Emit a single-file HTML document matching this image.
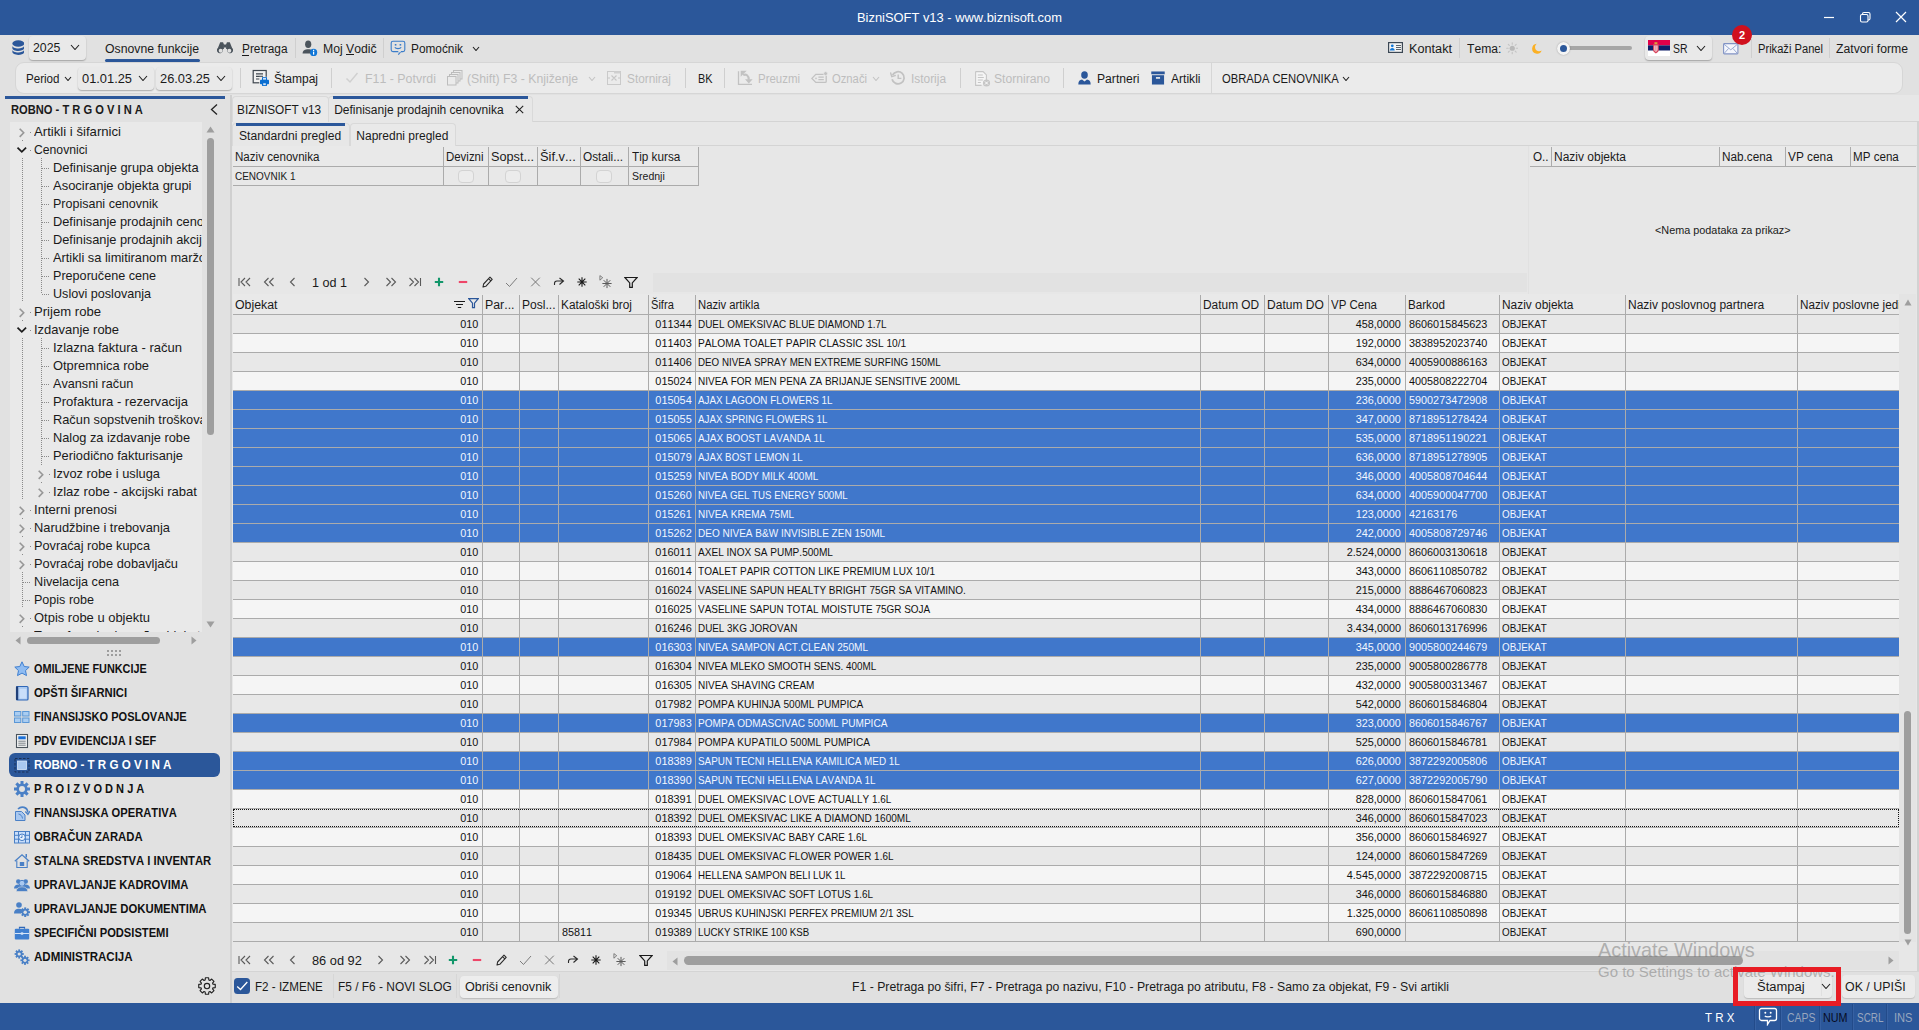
<!DOCTYPE html>
<html lang="sr"><head><meta charset="utf-8"><title>BizniSOFT v13 - www.biznisoft.com</title>
<style>
html,body{margin:0;padding:0}
body{width:1919px;height:1030px;overflow:hidden;position:relative;background:#e6e6e6;font-family:"Liberation Sans",sans-serif;font-size:12px;color:#1a1a1a;font-kerning:none}
.a{position:absolute;box-sizing:border-box;display:block}
.t{position:absolute;white-space:pre;display:inline-block}
.cb{border-radius:4px;background:#e9e9e9;box-shadow:0 1px 1.5px rgba(0,0,0,.28)}
</style></head><body>
<div class="a " style="left:0px;top:0px;width:1919px;height:35px;background:#2b579a;"></div>
<span class="t" style="top:9.00px;height:17px;line-height:17px;font-size:13px;color:#fff;left:857.00px;transform-origin:0 50%;transform:scaleX(0.9920);">BizniSOFT v13 - www.biznisoft.com</span>
<svg class="a" style="left:1822px;top:10px;" width="14" height="14" viewBox="0 0 14 14" preserveAspectRatio="none"><path d="M2 7.5H12" stroke="#fff" stroke-width="1.2"/></svg>
<svg class="a" style="left:1858px;top:10px;" width="14" height="14" viewBox="0 0 14 14" preserveAspectRatio="none"><rect x="2.5" y="4.5" width="7.5" height="7.5" rx="1.5" fill="none" stroke="#fff" stroke-width="1.1"/><path d="M4.5 4.5V4a1.5 1.5 0 0 1 1.5-1.5H10.5A1.5 1.5 0 0 1 12 4V8.5A1.5 1.5 0 0 1 10.5 10H10" fill="none" stroke="#fff" stroke-width="1.1"/></svg>
<svg class="a" style="left:1894px;top:10px;" width="14" height="14" viewBox="0 0 14 14" preserveAspectRatio="none"><path d="M2 2L12 12M12 2L2 12" stroke="#fff" stroke-width="1.2"/></svg>
<div class="a " style="left:0px;top:35px;width:1919px;height:61px;background:#e1e1e1;"></div>
<svg class="a" style="left:11.7px;top:39.5px;" width="12.6" height="15.5" viewBox="0 0 14 16" preserveAspectRatio="none"><g fill="#2b579a"><ellipse cx="7" cy="3.6" rx="6.6" ry="3.3"/><path d="M.4 5.6c0 1.8 3 3.2 6.6 3.2s6.6-1.4 6.6-3.2v2.6c0 1.8-3 3.2-6.6 3.2S.4 10 .4 8.200z"/><path d="M.4 9.8c0 1.800 3 3.200 6.600 3.200s6.600-1.400 6.600-3.200v2.400c0 1.800-3 3.200-6.600 3.200S.4 14 .4 12.200z"/></g></svg>
<div class="a cb" style="left:29px;top:36px;width:57px;height:23.5px;"></div>
<span class="t" style="top:39.00px;height:17px;line-height:17px;font-size:13px;left:33.00px;transform-origin:0 50%;transform:scaleX(0.9474);">2025</span>
<svg class="a" style="left:70.0px;top:43.95px;" width="10" height="6.5" viewBox="0 0 10 6.5" preserveAspectRatio="none"><path d="M1 1 L5.0 5.5 L9 1" fill="none" stroke="#222" stroke-width="1.1"/></svg>
<span class="t" style="top:40.50px;height:16px;line-height:16px;font-size:12px;left:105.00px;transform-origin:0 50%;transform:scaleX(1.0212);">Osnovne funkcije</span>
<div class="a " style="left:105px;top:59px;width:95px;height:3px;background:#2b579a;border-radius:1.5px;"></div>
<svg class="a" style="left:217px;top:41px;" width="16" height="14" viewBox="0 0 16 14" preserveAspectRatio="none"><g fill="#4b545c"><path d="M3.2 1.2h3v1.300h.7v5.500h-1.200a3 3 0 1 1-4.800-1z"/><path d="M12.800 1.200h-3v1.300h-.7v5.500h1.200a3 3 0 1 0 4.800-1z"/><rect x="6.500" y="3.500" width="3" height="3"/></g><circle cx="3.700" cy="9.700" r="2" fill="#e1e1e1"/><circle cx="12.300" cy="9.700" r="2" fill="#e1e1e1"/></svg>
<span class="t" style="top:40.50px;height:16px;line-height:16px;font-size:12px;left:242.00px;transform-origin:0 50%;transform:scaleX(0.9886);text-decoration:none;">Pretraga</span>
<div class="a " style="left:242px;top:54.5px;width:7px;height:1px;background:#1a1a1a;"></div>
<div class="a " style="left:295px;top:38px;width:1px;height:20px;background:#cfcfcf;"></div>
<svg class="a" style="left:302px;top:40px;" width="16" height="17" viewBox="0 0 16 17" preserveAspectRatio="none"><g fill="#4b545c"><ellipse cx="6.200" cy="4.300" rx="3.100" ry="3.800"/><path d="M.6 13.500c0-3 2.400-4.300 5.600-4.300s5.600 1.300 5.600 4.300z"/></g><circle cx="11.600" cy="12.400" r="3.600" fill="#1177d7"/><rect x="11" y="11.600" width="1.200" height="3" fill="#fff"/><rect x="11" y="9.800" width="1.200" height="1.200" fill="#fff"/></svg>
<span class="t" style="top:40.50px;height:16px;line-height:16px;font-size:12px;left:323.00px;transform-origin:0 50%;transform:scaleX(1.0187);">Moj Vodič</span>
<div class="a " style="left:346px;top:54px;width:7.5px;height:1px;background:#1a1a1a;"></div>
<div class="a " style="left:383px;top:38px;width:1px;height:20px;background:#cfcfcf;"></div>
<svg class="a" style="left:390px;top:40px;" width="16" height="16" viewBox="0 0 16 16" preserveAspectRatio="none"><rect x="1.200" y="1.200" width="13.600" height="10.400" rx="1.800" fill="none" stroke="#3b7dc9" stroke-width="1.100"/><path d="M10.800 11.600L8.300 14.600" stroke="#3b7dc9" stroke-width="1.100"/><path d="M8.300 11.600h2.500" stroke="#e1e1e1" stroke-width="1.300"/><rect x="4.800" y="4" width="1.600" height="1.600" fill="#3b7dc9"/><rect x="9.600" y="4" width="1.600" height="1.600" fill="#3b7dc9"/><path d="M4.800 7.300c1 1.700 5.400 1.700 6.400 0" fill="none" stroke="#3b7dc9" stroke-width="1.100"/></svg>
<span class="t" style="top:40.50px;height:16px;line-height:16px;font-size:12px;left:411.00px;transform-origin:0 50%;transform:scaleX(0.9869);">Pomoćnik</span>
<svg class="a" style="left:472.0px;top:45.75px;" width="8" height="5.5" viewBox="0 0 8 5.5" preserveAspectRatio="none"><path d="M1 1 L4.0 4.5 L7 1" fill="none" stroke="#222" stroke-width="1.1"/></svg>
<svg class="a" style="left:1388px;top:42px;" width="15" height="11" viewBox="0 0 15 11" preserveAspectRatio="none"><rect x=".6" y=".6" width="13.800" height="9.800" fill="#f4f4f4" stroke="#3b4754" stroke-width="1.200"/><circle cx="4.300" cy="3.800" r="1.400" fill="#1177d7"/><path d="M1.900 8.600c0-1.900 1-2.700 2.400-2.700s2.400.8 2.400 2.700z" fill="#1177d7"/><path d="M8 3.500h5M8 5.500h5M8 7.500h5" stroke="#4b545c" stroke-width=".9"/></svg>
<span class="t" style="top:40.50px;height:16px;line-height:16px;font-size:12px;left:1409.00px;transform-origin:0 50%;transform:scaleX(1.0567);">Kontakt</span>
<div class="a " style="left:1459px;top:38px;width:1px;height:20px;background:#cfcfcf;"></div>
<span class="t" style="top:40.50px;height:16px;line-height:16px;font-size:12px;left:1467.00px;transform-origin:0 50%;transform:scaleX(1.0099);">Tema:</span>
<svg class="a" style="left:1505.5px;top:42px;" width="12.5" height="12.5" viewBox="0 0 14 14" preserveAspectRatio="none"><circle cx="7" cy="7" r="2.900" fill="#b9b9b9"/><g stroke="#c4c4c4" stroke-width="1.300" stroke-linecap="round"><path d="M7 .8v1.600M7 11.600v1.600M.8 7h1.600M11.600 7h1.600M2.600 2.600l1.100 1.100M10.300 10.300l1.100 1.100M2.600 11.400l1.100-1.100M10.300 3.700l1.100-1.100"/></g></svg>
<svg class="a" style="left:1530.5px;top:42.5px;" width="11.5" height="11.5" viewBox="0 0 14 14" preserveAspectRatio="none"><path d="M7 1a6 6 0 1 0 6 8.200 4.600 4.600 0 0 1-6-8.200z" fill="#fbb024"/></svg>
<div class="a " style="left:1566px;top:46px;width:66px;height:4px;background:#a6a6a6;border-radius:2px;"></div>
<div class="a " style="left:1556.5px;top:41.5px;width:13px;height:13px;background:#f4f4f4;border-radius:50%;box-shadow:0 0 1.500px rgba(0,0,0,.35);"></div>
<div class="a " style="left:1559.5px;top:44.5px;width:7px;height:7px;background:#2b579a;border-radius:50%;"></div>
<div class="a cb" style="left:1644.5px;top:36px;width:67px;height:24px;"></div>
<svg class="a" style="left:1648px;top:40px;" width="22" height="16" viewBox="0 0 22 16" preserveAspectRatio="none"><rect width="22" height="5.400" fill="#e1004a"/><rect y="5.400" width="22" height="5.300" fill="#0f1f6b"/><rect y="10.700" width="22" height="5.300" fill="#fff"/><path d="M5 4.200h5.800v5.600c0 1.800-1.500 3-2.900 3.700-1.400-.7-2.900-1.900-2.900-3.700z" fill="#d8435c"/><path d="M6.200 5.400h3.400v4.200c0 1.100-.9 1.900-1.700 2.400-.8-.5-1.700-1.300-1.700-2.400z" fill="#f1d5d8"/><path d="M7.400 5.400h1v6.200h-1z" fill="#d8435c" opacity=".6"/><path d="M6.400 2.200h3v2h-3z" fill="#d9a13f"/></svg>
<span class="t" style="top:40.50px;height:16px;line-height:16px;font-size:12px;left:1673.00px;transform-origin:0 50%;transform:scaleX(0.8698);">SR</span>
<svg class="a" style="left:1696.0px;top:44.95px;" width="10" height="6.5" viewBox="0 0 10 6.5" preserveAspectRatio="none"><path d="M1 1 L5.0 5.5 L9 1" fill="none" stroke="#222" stroke-width="1.1"/></svg>
<svg class="a" style="left:1722.5px;top:43px;" width="16" height="12" viewBox="0 0 16 12" preserveAspectRatio="none"><rect x=".6" y=".6" width="14.300" height="10.300" rx=".8" fill="#f4f6fc" stroke="#8193c4" stroke-width="1.100"/><path d="M1 1.200L7.750 6.800L14.500 1.200M1 10.600L5.600 5.400M14.500 10.600L9.900 5.400" fill="none" stroke="#8fa0cc" stroke-width=".9"/></svg>
<div class="a " style="left:1732px;top:25px;width:20px;height:20px;background:#d0101e;border-radius:50%;"></div>
<span class="t" style="top:27.50px;height:15px;line-height:15px;font-size:11px;font-weight:bold;color:#fff;left:1738.94px;transform-origin:50% 50%;">2</span>
<div class="a " style="left:1751px;top:38px;width:1px;height:20px;background:#cfcfcf;"></div>
<span class="t" style="top:40.50px;height:16px;line-height:16px;font-size:12px;left:1758.00px;transform-origin:0 50%;transform:scaleX(0.9281);">Prikaži Panel</span>
<div class="a " style="left:1829px;top:38px;width:1px;height:20px;background:#cfcfcf;"></div>
<span class="t" style="top:40.50px;height:16px;line-height:16px;font-size:12px;left:1836.00px;transform-origin:0 50%;transform:scaleX(1.0186);">Zatvori forme</span>
<div class="a " style="left:15px;top:62px;width:1888px;height:32px;background:#ebebeb;border:1px solid #d6d6d6;border-radius:9px;"></div>
<span class="t" style="top:70.80px;height:16px;line-height:16px;font-size:12px;left:26.00px;transform-origin:0 50%;transform:scaleX(0.9658);">Period</span>
<svg class="a" style="left:64.0px;top:75.75px;" width="8" height="5.5" viewBox="0 0 8 5.5" preserveAspectRatio="none"><path d="M1 1 L4.0 4.5 L7 1" fill="none" stroke="#222" stroke-width="1.1"/></svg>
<div class="a cb" style="left:78px;top:66.5px;width:75.5px;height:23px;"></div>
<span class="t" style="top:70.80px;height:16px;line-height:16px;font-size:12px;left:82.00px;transform-origin:0 50%;transform:scaleX(1.0704);">01.01.25</span>
<svg class="a" style="left:138.0px;top:74.75px;" width="10" height="6.5" viewBox="0 0 10 6.5" preserveAspectRatio="none"><path d="M1 1 L5.0 5.5 L9 1" fill="none" stroke="#222" stroke-width="1.1"/></svg>
<div class="a cb" style="left:156px;top:66.5px;width:75.5px;height:23px;"></div>
<span class="t" style="top:70.80px;height:16px;line-height:16px;font-size:12px;left:160.00px;transform-origin:0 50%;transform:scaleX(1.0704);">26.03.25</span>
<svg class="a" style="left:216.0px;top:74.75px;" width="10" height="6.5" viewBox="0 0 10 6.5" preserveAspectRatio="none"><path d="M1 1 L5.0 5.5 L9 1" fill="none" stroke="#222" stroke-width="1.1"/></svg>
<div class="a " style="left:240px;top:68px;width:1px;height:20px;background:#cfcfcf;"></div>
<svg class="a" style="left:252px;top:69px;" width="18" height="18" viewBox="0 0 18 18" preserveAspectRatio="none"><rect x="1.200" y="1.500" width="13" height="12.300" fill="#f1f1f1" stroke="#3f474f" stroke-width="1.200"/><path d="M4 4.800h7M4 7.400h7M4 10h4.500" stroke="#3f474f" stroke-width="1.200"/><path d="M7.300 7.800h10.400v9.600H7.300z" fill="#ebebeb"/><rect x="8" y="10.800" width="9" height="4.400" rx=".8" fill="#0a6ed1"/><rect x="10" y="8.200" width="5" height="3" fill="#0a6ed1"/><rect x="11" y="9.200" width="3" height="1.300" fill="#fff"/><rect x="10" y="13.600" width="5" height="3.300" fill="#0a6ed1"/><rect x="11.200" y="14.400" width="2.600" height="1.400" fill="#fff"/></svg>
<span class="t" style="top:70.80px;height:16px;line-height:16px;font-size:12px;left:274.00px;transform-origin:0 50%;">Štampaj</span>
<div class="a " style="left:331px;top:68px;width:1px;height:20px;background:#cfcfcf;"></div>
<svg class="a" style="left:345px;top:71px;" width="14" height="13" viewBox="0 0 14 13" preserveAspectRatio="none"><path d="M1.500 7.500L5 11L12.500 2" fill="none" stroke="#d0d0d0" stroke-width="1.500"/></svg>
<span class="t" style="top:70.80px;height:16px;line-height:16px;font-size:12px;color:#bdbdbd;left:365.00px;transform-origin:0 50%;transform:scaleX(1.0325);">F11 - Potvrdi</span>
<svg class="a" style="left:447px;top:70px;" width="16" height="16" viewBox="0 0 16 16" preserveAspectRatio="none"><g fill="#ebebeb" stroke="#bdbdbd" stroke-width="1"><rect x="6.500" y=".5" width="8.500" height="8.500"/><rect x="4.500" y="2.500" width="8.500" height="8.500"/><rect x="2.500" y="4.500" width="8.500" height="8.500"/><rect x=".5" y="6.500" width="8.500" height="8.500"/></g></svg>
<span class="t" style="top:70.80px;height:16px;line-height:16px;font-size:12px;color:#bdbdbd;left:467.00px;transform-origin:0 50%;transform:scaleX(1.0211);">(Shift) F3 - Knjiženje</span>
<svg class="a" style="left:588.0px;top:75.75px;" width="8" height="5.5" viewBox="0 0 8 5.5" preserveAspectRatio="none"><path d="M1 1 L4.0 4.5 L7 1" fill="none" stroke="#c4c4c4" stroke-width="1.1"/></svg>
<svg class="a" style="left:607px;top:71px;" width="14" height="14" viewBox="0 0 14 14" preserveAspectRatio="none"><rect x=".5" y=".5" width="13" height="13" fill="none" stroke="#cacaca" stroke-width="1"/><rect x="7" y=".5" width="6.500" height="2" fill="#cfcfcf"/><path d="M4.500 4.500l5 5M9.500 4.500l-5 5M.5 7h2.500M11 7h2.500" stroke="#c6c6c6" stroke-width="1.100"/></svg>
<span class="t" style="top:70.80px;height:16px;line-height:16px;font-size:12px;color:#bdbdbd;left:627.00px;transform-origin:0 50%;transform:scaleX(0.9847);">Storniraj</span>
<div class="a " style="left:685px;top:68px;width:1px;height:20px;background:#cfcfcf;"></div>
<span class="t" style="top:70.80px;height:16px;line-height:16px;font-size:12px;left:698.00px;transform-origin:0 50%;transform:scaleX(0.9058);">BK</span>
<div class="a " style="left:724px;top:68px;width:1px;height:20px;background:#cfcfcf;"></div>
<svg class="a" style="left:737px;top:70px;" width="17" height="16" viewBox="0 0 17 16" preserveAspectRatio="none"><path d="M1.500 1.200V14.400H15" fill="none" stroke="#c2c2c2" stroke-width="1.300"/><path d="M6.200 5.200C9 3.600 11.800 5.400 11.800 9.800" fill="none" stroke="#c2c2c2" stroke-width="2.100"/><path d="M3.700 .8v6l6-6z" fill="#c2c2c2"/><path d="M8 9.200h7.600l-3.800 4.400z" fill="#c2c2c2"/></svg>
<span class="t" style="top:70.80px;height:16px;line-height:16px;font-size:12px;color:#bdbdbd;left:758.00px;transform-origin:0 50%;transform:scaleX(0.9543);">Preuzmi</span>
<svg class="a" style="left:811px;top:71px;" width="17" height="13" viewBox="0 0 17 13" preserveAspectRatio="none"><path d="M4.800 3.400h9.400a1 1 0 0 1 1 1v6a1 1 0 0 1-1 1H4.800L.9 7.400z" fill="none" stroke="#c2c2c2" stroke-width="1.300"/><path d="M7.400 6.100h5.400M7.400 8.700h5.400" stroke="#c2c2c2" stroke-width="1.200"/><circle cx="5" cy="7.400" r=".8" fill="#c2c2c2"/><circle cx="14.600" cy="2.600" r="2" fill="#c2c2c2" stroke="#ebebeb" stroke-width=".8"/></svg>
<span class="t" style="top:70.80px;height:16px;line-height:16px;font-size:12px;color:#bdbdbd;left:832.00px;transform-origin:0 50%;transform:scaleX(0.9371);">Označi</span>
<svg class="a" style="left:872.0px;top:75.75px;" width="8" height="5.5" viewBox="0 0 8 5.5" preserveAspectRatio="none"><path d="M1 1 L4.0 4.5 L7 1" fill="none" stroke="#c4c4c4" stroke-width="1.1"/></svg>
<svg class="a" style="left:890px;top:70px;" width="16" height="16" viewBox="0 0 16 16" preserveAspectRatio="none"><path d="M2.600 5a6.100 6.100 0 1 1-.5 4.200" fill="none" stroke="#c2c2c2" stroke-width="1.800"/><path d="M.4 2.400L1.800 6.600l4-1.200" fill="none" stroke="#c2c2c2" stroke-width="1.500"/><path d="M8.200 4.600V8.400h3.200" fill="none" stroke="#c2c2c2" stroke-width="1.400"/></svg>
<span class="t" style="top:70.80px;height:16px;line-height:16px;font-size:12px;color:#bdbdbd;left:911.00px;transform-origin:0 50%;transform:scaleX(0.9903);">Istorija</span>
<div class="a " style="left:960px;top:68px;width:1px;height:20px;background:#cfcfcf;"></div>
<svg class="a" style="left:975px;top:71px;" width="16" height="16" viewBox="0 0 16 16" preserveAspectRatio="none"><path d="M.6 .6h7.500l3.300 3.300v9.900H.6z" fill="#f5f5f5" stroke="none"/><path d="M.6 .6h7.500l3.300 3.300v6M.6 .6v13.800h6" fill="none" stroke="#c6c6c6" stroke-width="1.100"/><path d="M2.800 4h5M2.800 6.500h6M2.800 9h5M2.800 11.500h3" stroke="#c6c6c6" stroke-width="1"/><circle cx="11.500" cy="12" r="3.600" fill="#c6c6c6"/><path d="M10 10.500l3 3M13 10.500l-3 3" stroke="#fff" stroke-width="1"/></svg>
<span class="t" style="top:70.80px;height:16px;line-height:16px;font-size:12px;color:#bdbdbd;left:994.00px;transform-origin:0 50%;transform:scaleX(1.0115);">Stornirano</span>
<div class="a " style="left:1063px;top:68px;width:1px;height:20px;background:#cfcfcf;"></div>
<svg class="a" style="left:1078px;top:71px;" width="13" height="14" viewBox="0 0 13 15" preserveAspectRatio="none"><g fill="#2b579a"><ellipse cx="6.500" cy="4.200" rx="3.300" ry="4"/><path d="M.3 14.500c0-3.500 1.500-5 3.700-5.300l2.500 2 2.500-2c2.200.3 3.700 1.800 3.700 5.300z"/></g></svg>
<span class="t" style="top:70.80px;height:16px;line-height:16px;font-size:12px;left:1097.00px;transform-origin:0 50%;transform:scaleX(1.0115);">Partneri</span>
<svg class="a" style="left:1151px;top:71px;" width="14" height="14" viewBox="0 0 15 15" preserveAspectRatio="none"><g fill="#2b579a"><rect x=".3" y=".5" width="14.400" height="3"/><path d="M1 4.500h13V14.500H1z"/></g><rect x="5.300" y="6.500" width="4.400" height="1.800" fill="#ebebeb"/></svg>
<span class="t" style="top:70.80px;height:16px;line-height:16px;font-size:12px;left:1171.00px;transform-origin:0 50%;transform:scaleX(1.0057);">Artikli</span>
<div class="a " style="left:1211px;top:63px;width:1px;height:30px;background:#d6d6d6;"></div>
<span class="t" style="top:70.80px;height:16px;line-height:16px;font-size:12px;left:1222.00px;transform-origin:0 50%;transform:scaleX(0.9352);">OBRADA CENOVNIKA</span>
<svg class="a" style="left:1342.0px;top:75.75px;" width="8" height="5.5" viewBox="0 0 8 5.5" preserveAspectRatio="none"><path d="M1 1 L4.0 4.5 L7 1" fill="none" stroke="#222" stroke-width="1.1"/></svg>
<div class="a " style="left:0px;top:95px;width:230px;height:908px;background:#e1e1e1;"></div>
<div class="a " style="left:5px;top:96px;width:220px;height:2.5px;background:#2b579a;"></div>
<span class="t" style="top:101.00px;height:17px;line-height:17px;font-size:13px;font-weight:bold;left:11.40px;transform-origin:0 50%;transform:scaleX(0.8575);">ROBNO - T R G O V I N A</span>
<svg class="a" style="left:209px;top:103px;" width="10" height="13" viewBox="0 0 10 13" preserveAspectRatio="none"><path d="M8 1.500L2.500 6.500L8 11.500" fill="none" stroke="#222" stroke-width="1.300"/></svg>
<div class="a " style="left:10px;top:122px;width:192px;height:510px;background:#e9e9e9;"></div>
<div class="a" style="left:10px;top:122px;width:192px;height:510px;overflow:hidden">
<svg class="a" style="left:8px;top:3.5px" width="8" height="12" viewBox="0 0 8 12"><path d="M1.700 2.700L5.700 6.800L1.700 10.900" fill="none" stroke="#979797" stroke-width="1.600"/></svg>
<div class="a" style="left:20px;top:10px;width:1px;height:1px;background:repeating-linear-gradient(to right,#8a8a8a 0 1px,transparent 1px 2px)"></div>
<span class="t" style="left:24.3px;top:1.0px;height:17px;line-height:17px;font-size:13px;transform-origin:0 50%;transform:scaleX(1.0122)">Artikli i šifarnici</span>
<svg class="a" style="left:6px;top:23.5px" width="12" height="8" viewBox="0 0 12 8"><path d="M1.500 1.700L5.800 5.900L10.100 1.700" fill="none" stroke="#1c1c1c" stroke-width="1.700"/></svg>
<div class="a" style="left:20px;top:28px;width:1px;height:1px;background:repeating-linear-gradient(to right,#8a8a8a 0 1px,transparent 1px 2px)"></div>
<span class="t" style="left:24.3px;top:19.0px;height:17px;line-height:17px;font-size:13px;transform-origin:0 50%;transform:scaleX(0.9372)">Cenovnici</span>
<div class="a" style="left:32px;top:46px;width:8px;height:1px;background:repeating-linear-gradient(to right,#8a8a8a 0 1px,transparent 1px 2px)"></div>
<span class="t" style="left:43.4px;top:37.0px;height:17px;line-height:17px;font-size:13px;transform-origin:0 50%;transform:scaleX(0.9924)">Definisanje grupa objekta</span>
<div class="a" style="left:32px;top:64px;width:8px;height:1px;background:repeating-linear-gradient(to right,#8a8a8a 0 1px,transparent 1px 2px)"></div>
<span class="t" style="left:43.4px;top:55.0px;height:17px;line-height:17px;font-size:13px;transform-origin:0 50%;transform:scaleX(0.9982)">Asociranje objekta grupi</span>
<div class="a" style="left:32px;top:82px;width:8px;height:1px;background:repeating-linear-gradient(to right,#8a8a8a 0 1px,transparent 1px 2px)"></div>
<span class="t" style="left:43.4px;top:73.0px;height:17px;line-height:17px;font-size:13px;transform-origin:0 50%;transform:scaleX(0.9623)">Propisani cenovnik</span>
<div class="a" style="left:32px;top:100px;width:8px;height:1px;background:repeating-linear-gradient(to right,#8a8a8a 0 1px,transparent 1px 2px)"></div>
<span class="t" style="left:43.4px;top:91.0px;height:17px;line-height:17px;font-size:13px;transform-origin:0 50%;transform:scaleX(0.9850)">Definisanje prodajnih cenovnika</span>
<div class="a" style="left:32px;top:118px;width:8px;height:1px;background:repeating-linear-gradient(to right,#8a8a8a 0 1px,transparent 1px 2px)"></div>
<span class="t" style="left:43.4px;top:109.0px;height:17px;line-height:17px;font-size:13px;transform-origin:0 50%;transform:scaleX(0.9850)">Definisanje prodajnih akcija</span>
<div class="a" style="left:32px;top:136px;width:8px;height:1px;background:repeating-linear-gradient(to right,#8a8a8a 0 1px,transparent 1px 2px)"></div>
<span class="t" style="left:43.4px;top:127.0px;height:17px;line-height:17px;font-size:13px;transform-origin:0 50%;transform:scaleX(0.9850)">Artikli sa limitiranom maržom</span>
<div class="a" style="left:32px;top:154px;width:8px;height:1px;background:repeating-linear-gradient(to right,#8a8a8a 0 1px,transparent 1px 2px)"></div>
<span class="t" style="left:43.4px;top:145.0px;height:17px;line-height:17px;font-size:13px;transform-origin:0 50%;transform:scaleX(0.9695)">Preporučene cene</span>
<div class="a" style="left:32px;top:172px;width:8px;height:1px;background:repeating-linear-gradient(to right,#8a8a8a 0 1px,transparent 1px 2px)"></div>
<span class="t" style="left:43.4px;top:163.0px;height:17px;line-height:17px;font-size:13px;transform-origin:0 50%;transform:scaleX(0.9687)">Uslovi poslovanja</span>
<svg class="a" style="left:8px;top:183.5px" width="8" height="12" viewBox="0 0 8 12"><path d="M1.700 2.700L5.700 6.800L1.700 10.900" fill="none" stroke="#979797" stroke-width="1.600"/></svg>
<div class="a" style="left:20px;top:190px;width:1px;height:1px;background:repeating-linear-gradient(to right,#8a8a8a 0 1px,transparent 1px 2px)"></div>
<span class="t" style="left:24.3px;top:181.0px;height:17px;line-height:17px;font-size:13px;transform-origin:0 50%;transform:scaleX(1.0080)">Prijem robe</span>
<svg class="a" style="left:6px;top:203.5px" width="12" height="8" viewBox="0 0 12 8"><path d="M1.500 1.700L5.800 5.900L10.100 1.700" fill="none" stroke="#1c1c1c" stroke-width="1.700"/></svg>
<div class="a" style="left:20px;top:208px;width:1px;height:1px;background:repeating-linear-gradient(to right,#8a8a8a 0 1px,transparent 1px 2px)"></div>
<span class="t" style="left:24.3px;top:199.0px;height:17px;line-height:17px;font-size:13px;transform-origin:0 50%;transform:scaleX(0.9967)">Izdavanje robe</span>
<div class="a" style="left:32px;top:226px;width:8px;height:1px;background:repeating-linear-gradient(to right,#8a8a8a 0 1px,transparent 1px 2px)"></div>
<span class="t" style="left:43.4px;top:217.0px;height:17px;line-height:17px;font-size:13px;transform-origin:0 50%;transform:scaleX(1.0030)">Izlazna faktura - račun</span>
<div class="a" style="left:32px;top:244px;width:8px;height:1px;background:repeating-linear-gradient(to right,#8a8a8a 0 1px,transparent 1px 2px)"></div>
<span class="t" style="left:43.4px;top:235.0px;height:17px;line-height:17px;font-size:13px;transform-origin:0 50%;transform:scaleX(0.9915)">Otpremnica robe</span>
<div class="a" style="left:32px;top:262px;width:8px;height:1px;background:repeating-linear-gradient(to right,#8a8a8a 0 1px,transparent 1px 2px)"></div>
<span class="t" style="left:43.4px;top:253.0px;height:17px;line-height:17px;font-size:13px;transform-origin:0 50%;transform:scaleX(0.9739)">Avansni račun</span>
<div class="a" style="left:32px;top:280px;width:8px;height:1px;background:repeating-linear-gradient(to right,#8a8a8a 0 1px,transparent 1px 2px)"></div>
<span class="t" style="left:43.4px;top:271.0px;height:17px;line-height:17px;font-size:13px;transform-origin:0 50%;transform:scaleX(1.0046)">Profaktura - rezervacija</span>
<div class="a" style="left:32px;top:298px;width:8px;height:1px;background:repeating-linear-gradient(to right,#8a8a8a 0 1px,transparent 1px 2px)"></div>
<span class="t" style="left:43.4px;top:289.0px;height:17px;line-height:17px;font-size:13px;transform-origin:0 50%;transform:scaleX(0.9850)">Račun sopstvenih troškova</span>
<div class="a" style="left:32px;top:316px;width:8px;height:1px;background:repeating-linear-gradient(to right,#8a8a8a 0 1px,transparent 1px 2px)"></div>
<span class="t" style="left:43.4px;top:307.0px;height:17px;line-height:17px;font-size:13px;transform-origin:0 50%;transform:scaleX(0.9822)">Nalog za izdavanje robe</span>
<div class="a" style="left:32px;top:334px;width:8px;height:1px;background:repeating-linear-gradient(to right,#8a8a8a 0 1px,transparent 1px 2px)"></div>
<span class="t" style="left:43.4px;top:325.0px;height:17px;line-height:17px;font-size:13px;transform-origin:0 50%;transform:scaleX(0.9885)">Periodično fakturisanje</span>
<svg class="a" style="left:27px;top:345.5px" width="8" height="12" viewBox="0 0 8 12"><path d="M1.700 2.700L5.700 6.800L1.700 10.900" fill="none" stroke="#979797" stroke-width="1.600"/></svg>
<div class="a" style="left:39px;top:352px;width:1px;height:1px;background:repeating-linear-gradient(to right,#8a8a8a 0 1px,transparent 1px 2px)"></div>
<span class="t" style="left:43.4px;top:343.0px;height:17px;line-height:17px;font-size:13px;transform-origin:0 50%;transform:scaleX(0.9871)">Izvoz robe i usluga</span>
<svg class="a" style="left:27px;top:363.5px" width="8" height="12" viewBox="0 0 8 12"><path d="M1.700 2.700L5.700 6.800L1.700 10.900" fill="none" stroke="#979797" stroke-width="1.600"/></svg>
<div class="a" style="left:39px;top:370px;width:1px;height:1px;background:repeating-linear-gradient(to right,#8a8a8a 0 1px,transparent 1px 2px)"></div>
<span class="t" style="left:43.4px;top:361.0px;height:17px;line-height:17px;font-size:13px;transform-origin:0 50%;transform:scaleX(1.0066)">Izlaz robe - akcijski rabat</span>
<svg class="a" style="left:8px;top:381.5px" width="8" height="12" viewBox="0 0 8 12"><path d="M1.700 2.700L5.700 6.800L1.700 10.900" fill="none" stroke="#979797" stroke-width="1.600"/></svg>
<div class="a" style="left:20px;top:388px;width:1px;height:1px;background:repeating-linear-gradient(to right,#8a8a8a 0 1px,transparent 1px 2px)"></div>
<span class="t" style="left:24.3px;top:379.0px;height:17px;line-height:17px;font-size:13px;transform-origin:0 50%;transform:scaleX(1.0075)">Interni prenosi</span>
<svg class="a" style="left:8px;top:399.5px" width="8" height="12" viewBox="0 0 8 12"><path d="M1.700 2.700L5.700 6.800L1.700 10.900" fill="none" stroke="#979797" stroke-width="1.600"/></svg>
<div class="a" style="left:20px;top:406px;width:1px;height:1px;background:repeating-linear-gradient(to right,#8a8a8a 0 1px,transparent 1px 2px)"></div>
<span class="t" style="left:24.3px;top:397.0px;height:17px;line-height:17px;font-size:13px;transform-origin:0 50%;transform:scaleX(0.9905)">Narudžbine i trebovanja</span>
<svg class="a" style="left:8px;top:417.5px" width="8" height="12" viewBox="0 0 8 12"><path d="M1.700 2.700L5.700 6.800L1.700 10.900" fill="none" stroke="#979797" stroke-width="1.600"/></svg>
<div class="a" style="left:20px;top:424px;width:1px;height:1px;background:repeating-linear-gradient(to right,#8a8a8a 0 1px,transparent 1px 2px)"></div>
<span class="t" style="left:24.3px;top:415.0px;height:17px;line-height:17px;font-size:13px;transform-origin:0 50%;transform:scaleX(0.9788)">Povraćaj robe kupca</span>
<svg class="a" style="left:8px;top:435.5px" width="8" height="12" viewBox="0 0 8 12"><path d="M1.700 2.700L5.700 6.800L1.700 10.900" fill="none" stroke="#979797" stroke-width="1.600"/></svg>
<div class="a" style="left:20px;top:442px;width:1px;height:1px;background:repeating-linear-gradient(to right,#8a8a8a 0 1px,transparent 1px 2px)"></div>
<span class="t" style="left:24.3px;top:433.0px;height:17px;line-height:17px;font-size:13px;transform-origin:0 50%;transform:scaleX(0.9864)">Povraćaj robe dobavljaču</span>
<div class="a" style="left:13px;top:460px;width:8px;height:1px;background:repeating-linear-gradient(to right,#8a8a8a 0 1px,transparent 1px 2px)"></div>
<span class="t" style="left:24.3px;top:451.0px;height:17px;line-height:17px;font-size:13px;transform-origin:0 50%;transform:scaleX(0.9722)">Nivelacija cena</span>
<div class="a" style="left:13px;top:478px;width:8px;height:1px;background:repeating-linear-gradient(to right,#8a8a8a 0 1px,transparent 1px 2px)"></div>
<span class="t" style="left:24.3px;top:469.0px;height:17px;line-height:17px;font-size:13px;transform-origin:0 50%;transform:scaleX(0.9654)">Popis robe</span>
<svg class="a" style="left:8px;top:489.5px" width="8" height="12" viewBox="0 0 8 12"><path d="M1.700 2.700L5.700 6.800L1.700 10.900" fill="none" stroke="#979797" stroke-width="1.600"/></svg>
<div class="a" style="left:20px;top:496px;width:1px;height:1px;background:repeating-linear-gradient(to right,#8a8a8a 0 1px,transparent 1px 2px)"></div>
<span class="t" style="left:24.3px;top:487.0px;height:17px;line-height:17px;font-size:13px;transform-origin:0 50%;transform:scaleX(0.9970)">Otpis robe u objektu</span>
<svg class="a" style="left:8px;top:507.5px" width="8" height="12" viewBox="0 0 8 12"><path d="M1.700 2.700L5.700 6.800L1.700 10.900" fill="none" stroke="#979797" stroke-width="1.600"/></svg>
<div class="a" style="left:20px;top:514px;width:1px;height:1px;background:repeating-linear-gradient(to right,#8a8a8a 0 1px,transparent 1px 2px)"></div>
<span class="t" style="left:24.3px;top:505.0px;height:17px;line-height:17px;font-size:13px;transform-origin:0 50%;transform:scaleX(0.9850)">Transfer robe između objekata</span>
<div class="a" style="left:12px;top:18px;width:1px;height:1px;background:repeating-linear-gradient(to bottom,#8a8a8a 0 1px,transparent 1px 2px)"></div>
<div class="a" style="left:12px;top:36px;width:1px;height:144px;background:repeating-linear-gradient(to bottom,#8a8a8a 0 1px,transparent 1px 2px)"></div>
<div class="a" style="left:12px;top:198px;width:1px;height:1px;background:repeating-linear-gradient(to bottom,#8a8a8a 0 1px,transparent 1px 2px)"></div>
<div class="a" style="left:12px;top:216px;width:1px;height:162px;background:repeating-linear-gradient(to bottom,#8a8a8a 0 1px,transparent 1px 2px)"></div>
<div class="a" style="left:12px;top:396px;width:1px;height:1px;background:repeating-linear-gradient(to bottom,#8a8a8a 0 1px,transparent 1px 2px)"></div>
<div class="a" style="left:12px;top:414px;width:1px;height:1px;background:repeating-linear-gradient(to bottom,#8a8a8a 0 1px,transparent 1px 2px)"></div>
<div class="a" style="left:12px;top:432px;width:1px;height:1px;background:repeating-linear-gradient(to bottom,#8a8a8a 0 1px,transparent 1px 2px)"></div>
<div class="a" style="left:12px;top:450px;width:1px;height:36px;background:repeating-linear-gradient(to bottom,#8a8a8a 0 1px,transparent 1px 2px)"></div>
<div class="a" style="left:12px;top:504px;width:1px;height:1px;background:repeating-linear-gradient(to bottom,#8a8a8a 0 1px,transparent 1px 2px)"></div>
<div class="a" style="left:12px;top:522px;width:1px;height:-10px;background:repeating-linear-gradient(to bottom,#8a8a8a 0 1px,transparent 1px 2px)"></div>
<div class="a" style="left:31px;top:36px;width:1px;height:136px;background:repeating-linear-gradient(to bottom,#8a8a8a 0 1px,transparent 1px 2px)"></div>
<div class="a" style="left:31px;top:216px;width:1px;height:127px;background:repeating-linear-gradient(to bottom,#8a8a8a 0 1px,transparent 1px 2px)"></div>
<div class="a" style="left:31px;top:360px;width:1px;height:1px;background:repeating-linear-gradient(to bottom,#8a8a8a 0 1px,transparent 1px 2px)"></div>
</div>
<svg class="a" style="left:206px;top:126px;" width="9" height="7" viewBox="0 0 9 7" preserveAspectRatio="none"><path d="M4.500 .5L8.500 6.500H.5z" fill="#9e9e9e"/></svg>
<div class="a " style="left:207px;top:138px;width:7px;height:297px;background:#9e9e9e;border-radius:3.500px;"></div>
<svg class="a" style="left:206px;top:621px;" width="9" height="7" viewBox="0 0 9 7" preserveAspectRatio="none"><path d="M4.500 6.500L8.500 .5H.5z" fill="#9e9e9e"/></svg>
<svg class="a" style="left:15px;top:636px;" width="6" height="9" viewBox="0 0 6 9" preserveAspectRatio="none"><path d="M.5 4.500L5.500 .5V8.500z" fill="#9e9e9e"/></svg>
<div class="a " style="left:26.5px;top:637px;width:133px;height:7px;background:#9e9e9e;border-radius:3.500px;"></div>
<svg class="a" style="left:191px;top:636px;" width="6" height="9" viewBox="0 0 6 9" preserveAspectRatio="none"><path d="M5.500 4.500L.5 .5V8.500z" fill="#9e9e9e"/></svg>
<div class="a " style="left:107px;top:650px;width:2px;height:2px;background:#9d9d9d;"></div>
<div class="a " style="left:111px;top:650px;width:2px;height:2px;background:#9d9d9d;"></div>
<div class="a " style="left:115px;top:650px;width:2px;height:2px;background:#9d9d9d;"></div>
<div class="a " style="left:119px;top:650px;width:2px;height:2px;background:#9d9d9d;"></div>
<div class="a " style="left:107px;top:654px;width:2px;height:2px;background:#9d9d9d;"></div>
<div class="a " style="left:111px;top:654px;width:2px;height:2px;background:#9d9d9d;"></div>
<div class="a " style="left:115px;top:654px;width:2px;height:2px;background:#9d9d9d;"></div>
<div class="a " style="left:119px;top:654px;width:2px;height:2px;background:#9d9d9d;"></div>
<svg class="a" style="left:14px;top:660.5px;" width="16" height="16" viewBox="0 0 16 16" preserveAspectRatio="none"><path d="M8 .8l2.200 4.700 5 .6-3.700 3.500 1 5L8 12.100 3.500 14.600l1-5L.8 6.100l5-.6z" fill="#8fbcf2" stroke="#3f7fd0" stroke-width="1"/></svg>
<span class="t" style="top:660.30px;height:17px;line-height:17px;font-size:13px;font-weight:bold;color:#111;left:34.20px;transform-origin:0 50%;transform:scaleX(0.8344);">OMILJENE FUNKCIJE</span>
<svg class="a" style="left:14px;top:684.5px;" width="16" height="16" viewBox="0 0 16 16" preserveAspectRatio="none"><rect x="2.500" y="1.500" width="11.500" height="13.500" rx="1" fill="#a9c8f0" stroke="#2f67b8" stroke-width="1.200"/><rect x="2" y="1.500" width="2.200" height="13.500" fill="#1f3f78"/><rect x="5.500" y="3.800" width="7" height="9.800" fill="#c9defa"/></svg>
<span class="t" style="top:684.30px;height:17px;line-height:17px;font-size:13px;font-weight:bold;color:#111;left:34.20px;transform-origin:0 50%;transform:scaleX(0.8643);">OPŠTI ŠIFARNICI</span>
<svg class="a" style="left:14px;top:708.5px;" width="16" height="16" viewBox="0 0 16 16" preserveAspectRatio="none"><g fill="#aacdf1" stroke="#5b97d6" stroke-width="1"><rect x=".5" y="2.500" width="6.300" height="4.500"/><rect x="8.700" y="2.500" width="6.300" height="4.500"/><rect x=".5" y="9" width="6.300" height="4.500"/><rect x="8.700" y="9" width="6.300" height="4.500"/></g></svg>
<span class="t" style="top:708.30px;height:17px;line-height:17px;font-size:13px;font-weight:bold;color:#111;left:34.20px;transform-origin:0 50%;transform:scaleX(0.8485);">FINANSIJSKO POSLOVANJE</span>
<svg class="a" style="left:14px;top:732.5px;" width="16" height="16" viewBox="0 0 16 16" preserveAspectRatio="none"><rect x="2.500" y="1.500" width="11" height="13" fill="#f4f4f4" stroke="#4b545c" stroke-width="1.100"/><rect x="4.300" y="3.300" width="7.400" height="3" fill="#1b6fd6"/><path d="M4.300 8.200h7.400M4.300 10.200h7.400M4.300 12.200h7.400" stroke="#5a636b" stroke-width=".8"/></svg>
<span class="t" style="top:732.30px;height:17px;line-height:17px;font-size:13px;font-weight:bold;color:#111;left:34.20px;transform-origin:0 50%;transform:scaleX(0.8458);">PDV EVIDENCIJA I SEF</span>
<div class="a " style="left:8.5px;top:753px;width:211.5px;height:23.5px;background:#2b579a;border-radius:6px;"></div>
<svg class="a" style="left:14px;top:756.5px;" width="16" height="16" viewBox="0 0 16 16" preserveAspectRatio="none"><rect x="1" y="1.500" width="14" height="13.500" fill="none" stroke="#1b3157" stroke-width="1" stroke-dasharray="2.500 1.500"/><rect x="3.500" y="4" width="9" height="8.500" fill="#a9c8f0" stroke="#d9e8fb" stroke-width=".8"/></svg>
<span class="t" style="top:756.30px;height:17px;line-height:17px;font-size:13px;font-weight:bold;color:#fff;left:34.20px;transform-origin:0 50%;transform:scaleX(0.8934);">ROBNO - T R G O V I N A</span>
<svg class="a" style="left:14px;top:780.5px;" width="16" height="16" viewBox="0 0 16 16" preserveAspectRatio="none"><g transform="translate(8 8)"><g fill="#4a80c6"><rect x="-1.500" y="-8" width="3" height="16"/><rect x="-1.500" y="-8" width="3" height="16" transform="rotate(45)"/><rect x="-1.500" y="-8" width="3" height="16" transform="rotate(90)"/><rect x="-1.500" y="-8" width="3" height="16" transform="rotate(135)"/><circle r="5.600"/></g><circle r="3" fill="#e1e1e1"/></g></svg>
<span class="t" style="top:780.30px;height:17px;line-height:17px;font-size:13px;font-weight:bold;color:#111;left:34.20px;transform-origin:0 50%;transform:scaleX(0.8484);">P R O I Z V O D N J A</span>
<svg class="a" style="left:14px;top:804.5px;" width="16" height="16" viewBox="0 0 16 16" preserveAspectRatio="none"><path d="M1.500 6.500h6l3.500 3.500v5.500H1.500z" fill="#a9c8f0" stroke="#4a80c6" stroke-width="1"/><path d="M4 4c3.500-3.500 9.500-2 9.800 3.500" fill="none" stroke="#4a80c6" stroke-width="1.600"/><path d="M11.300 6.500l2.600 3 2-3.400" fill="none" stroke="#4a80c6" stroke-width="1.300"/><path d="M4.500 9c2 .3 3.800 2 4 4.500" fill="none" stroke="#4a80c6" stroke-width="1"/></svg>
<span class="t" style="top:804.30px;height:17px;line-height:17px;font-size:13px;font-weight:bold;color:#111;left:34.20px;transform-origin:0 50%;transform:scaleX(0.8594);">FINANSIJSKA OPERATIVA</span>
<svg class="a" style="left:14px;top:828.5px;" width="16" height="16" viewBox="0 0 16 16" preserveAspectRatio="none"><rect x=".5" y="2.500" width="15" height="11.500" fill="#c9defa" stroke="#4a80c6" stroke-width="1"/><path d="M.5 6.300h15M.5 10.200h15M4.500 2.500v11.500M11.500 2.500v11.500" stroke="#4a80c6" stroke-width="1"/><circle cx="8" cy="8.300" r="3.300" fill="#e8f1fd" stroke="#4a80c6" stroke-width="1"/><path d="M8 6.300v2.200h-1.500" fill="none" stroke="#4a80c6" stroke-width="1"/></svg>
<span class="t" style="top:828.30px;height:17px;line-height:17px;font-size:13px;font-weight:bold;color:#111;left:34.20px;transform-origin:0 50%;transform:scaleX(0.8693);">OBRAČUN ZARADA</span>
<svg class="a" style="left:14px;top:852.5px;" width="16" height="16" viewBox="0 0 16 16" preserveAspectRatio="none"><path d="M.8 8.200L8 1.800l7.200 6.400" fill="none" stroke="#4a80c6" stroke-width="1.300"/><path d="M2.800 7.500V14.500h10.400V7.500" fill="none" stroke="#4a80c6" stroke-width="1.100"/><rect x="5.800" y="9" width="4.400" height="4" fill="#4a80c6"/><rect x="11.500" y="1" width="1.500" height="3.500" fill="#4a80c6"/></svg>
<span class="t" style="top:852.30px;height:17px;line-height:17px;font-size:13px;font-weight:bold;color:#111;left:34.20px;transform-origin:0 50%;transform:scaleX(0.8671);">STALNA SREDSTVA I INVENTAR</span>
<svg class="a" style="left:14px;top:876.5px;" width="16" height="16" viewBox="0 0 16 16" preserveAspectRatio="none"><g fill="#4a80c6"><circle cx="4.300" cy="4.500" r="2.300"/><circle cx="11.700" cy="4.500" r="2.300"/><path d="M0 11.500c0-2.800 2-4 4.300-4s4.300 1.200 4.300 4zM7.400 11.500c0-2.800 2-4 4.300-4s4.300 1.200 4.300 4z"/></g><circle cx="8" cy="6.300" r="3" fill="#a9c8f0" stroke="#4a80c6" stroke-width="1"/><path d="M2.300 14.500c0-3.200 2.500-4.700 5.700-4.700s5.700 1.500 5.700 4.700z" fill="#4a80c6" stroke="#e1e1e1" stroke-width=".6"/></svg>
<span class="t" style="top:876.30px;height:17px;line-height:17px;font-size:13px;font-weight:bold;color:#111;left:34.20px;transform-origin:0 50%;transform:scaleX(0.8616);">UPRAVLJANJE KADROVIMA</span>
<svg class="a" style="left:14px;top:900.5px;" width="16" height="16" viewBox="0 0 16 16" preserveAspectRatio="none"><g fill="#4a80c6"><circle cx="5" cy="4" r="2.800"/><path d="M0 12.500c0-3.400 2.300-4.800 5-4.800 1.500 0 2.700.4 3.600 1.200L7 12.500z"/></g><g transform="translate(11.200 11.200)"><g fill="#4a80c6"><rect x="-1" y="-4.800" width="2" height="9.600"/><rect x="-1" y="-4.800" width="2" height="9.600" transform="rotate(45)"/><rect x="-1" y="-4.800" width="2" height="9.600" transform="rotate(90)"/><rect x="-1" y="-4.800" width="2" height="9.600" transform="rotate(135)"/><circle r="3.400"/></g><circle r="1.700" fill="#e1e1e1"/></g></svg>
<span class="t" style="top:900.30px;height:17px;line-height:17px;font-size:13px;font-weight:bold;color:#111;left:34.20px;transform-origin:0 50%;transform:scaleX(0.8719);">UPRAVLJANJE DOKUMENTIMA</span>
<svg class="a" style="left:14px;top:924.5px;" width="16" height="16" viewBox="0 0 16 16" preserveAspectRatio="none"><path d="M5.500 3.800V2.300h5v1.500" fill="none" stroke="#2f67b8" stroke-width="1.200"/><rect x=".8" y="3.800" width="14.400" height="10.700" rx="1" fill="#3f7fd0"/><rect x=".8" y="8" width="14.400" height="1" fill="#d5e4f8"/><rect x="6.800" y="7.400" width="2.400" height="2.300" fill="#d5e4f8"/></svg>
<span class="t" style="top:924.30px;height:17px;line-height:17px;font-size:13px;font-weight:bold;color:#111;left:34.20px;transform-origin:0 50%;transform:scaleX(0.8581);">SPECIFIČNI PODSISTEMI</span>
<svg class="a" style="left:14px;top:948.5px;" width="16" height="16" viewBox="0 0 16 16" preserveAspectRatio="none"><g transform="translate(5.200 5)"><g fill="#4a80c6"><rect x="-.9" y="-4.600" width="1.800" height="9.200"/><rect x="-.9" y="-4.600" width="1.800" height="9.200" transform="rotate(45)"/><rect x="-.9" y="-4.600" width="1.800" height="9.200" transform="rotate(90)"/><rect x="-.9" y="-4.600" width="1.800" height="9.200" transform="rotate(135)"/><circle r="3.200"/></g><circle r="1.600" fill="#e1e1e1"/></g><g transform="translate(11 11.300)"><g fill="#4a80c6"><rect x="-.9" y="-4.600" width="1.800" height="9.200"/><rect x="-.9" y="-4.600" width="1.800" height="9.200" transform="rotate(45)"/><rect x="-.9" y="-4.600" width="1.800" height="9.200" transform="rotate(90)"/><rect x="-.9" y="-4.600" width="1.800" height="9.200" transform="rotate(135)"/><circle r="3.200"/></g><circle r="1.600" fill="#e1e1e1"/></g></svg>
<span class="t" style="top:948.30px;height:17px;line-height:17px;font-size:13px;font-weight:bold;color:#111;left:34.20px;transform-origin:0 50%;transform:scaleX(0.8865);">ADMINISTRACIJA</span>
<svg class="a" style="left:197px;top:976px;" width="20" height="20" viewBox="0 0 20 20" preserveAspectRatio="none"><g transform="translate(10 10)" fill="none" stroke="#222" stroke-width="1.150" stroke-linejoin="round"><path d="M-1.60 -8.25L1.60 -8.25L1.84 -6.02L2.96 -5.56L4.70 -6.96L6.96 -4.70L5.56 -2.96L6.02 -1.84L8.25 -1.60L8.25 1.60L6.02 1.84L5.56 2.96L6.96 4.70L4.70 6.96L2.96 5.56L1.84 6.02L1.60 8.25L-1.60 8.25L-1.84 6.02L-2.96 5.56L-4.70 6.96L-6.96 4.70L-5.56 2.96L-6.02 1.84L-8.25 1.60L-8.25 -1.60L-6.02 -1.84L-5.56 -2.96L-6.96 -4.70L-4.70 -6.96L-2.96 -5.56L-1.84 -6.02z"/><circle r="2.700"/></g></svg>
<div class="a " style="left:230px;top:95px;width:1689px;height:908px;background:#e7e7e7;"></div>
<div class="a " style="left:230px;top:95px;width:2px;height:908px;background:#d0d0d0;"></div>
<div class="a " style="left:232px;top:121px;width:1686px;height:1px;background:#d4d4d4;"></div>
<div class="a " style="left:231.5px;top:96px;width:97px;height:26px;background:#e9e9e9;border:1px solid #d9d9d9;border-bottom:none;border-radius:4px 4px 0 0;"></div>
<span class="t" style="top:101.50px;height:16px;line-height:16px;font-size:12px;left:237.00px;transform-origin:0 50%;transform:scaleX(0.9844);">BIZNISOFT v13</span>
<div class="a " style="left:328px;top:96px;width:204.5px;height:26px;background:#e7e7e7;border:1px solid #d9d9d9;border-bottom:none;border-radius:4px 4px 0 0;"></div>
<div class="a " style="left:333.3px;top:96px;width:194.5px;height:3px;background:#2b579a;"></div>
<span class="t" style="top:101.50px;height:16px;line-height:16px;font-size:12px;left:334.20px;transform-origin:0 50%;">Definisanje prodajnih cenovnika</span>
<svg class="a" style="left:514px;top:103.5px;" width="11" height="11" viewBox="0 0 11 11" preserveAspectRatio="none"><path d="M1.800 1.800l7.400 7.400M9.200 1.800l-7.400 7.400" stroke="#222" stroke-width="1.100"/></svg>
<div class="a " style="left:232px;top:145px;width:1686px;height:1px;background:#d4d4d4;"></div>
<div class="a " style="left:232px;top:123px;width:117.5px;height:23px;background:#e7e7e7;border:1px solid #d9d9d9;border-bottom:none;border-radius:4px 4px 0 0;"></div>
<div class="a " style="left:236.3px;top:123px;width:108.7px;height:3px;background:#2b579a;"></div>
<span class="t" style="top:127.50px;height:16px;line-height:16px;font-size:12px;left:239.20px;transform-origin:0 50%;transform:scaleX(1.0068);">Standardni pregled</span>
<div class="a " style="left:349.5px;top:123px;width:106.5px;height:22.5px;background:#e9e9e9;border:1px solid #d9d9d9;border-bottom:none;border-radius:4px 4px 0 0;"></div>
<span class="t" style="top:127.50px;height:16px;line-height:16px;font-size:12px;left:356.30px;transform-origin:0 50%;">Napredni pregled</span>
<div class="a " style="left:232.5px;top:146px;width:466px;height:20px;background:#e9e9e9;"></div>
<div class="a " style="left:232.5px;top:166px;width:466px;height:1px;background:#ababab;"></div>
<div class="a " style="left:232.5px;top:167px;width:466px;height:18px;background:#e8e8e8;"></div>
<div class="a " style="left:232.5px;top:185px;width:466px;height:1px;background:#ababab;"></div>
<div class="a " style="left:443px;top:147px;width:1px;height:39px;background:#ababab;"></div>
<div class="a " style="left:488px;top:147px;width:1px;height:39px;background:#ababab;"></div>
<div class="a " style="left:537px;top:147px;width:1px;height:39px;background:#ababab;"></div>
<div class="a " style="left:580px;top:147px;width:1px;height:39px;background:#ababab;"></div>
<div class="a " style="left:628px;top:147px;width:1px;height:39px;background:#ababab;"></div>
<div class="a " style="left:698px;top:147px;width:1px;height:39px;background:#ababab;"></div>
<span class="t" style="top:148.50px;height:16px;line-height:16px;font-size:12px;left:235.30px;transform-origin:0 50%;transform:scaleX(0.9659);">Naziv cenovnika</span>
<span class="t" style="top:148.50px;height:16px;line-height:16px;font-size:12px;left:445.80px;transform-origin:0 50%;transform:scaleX(0.9531);">Devizni</span>
<span class="t" style="top:148.50px;height:16px;line-height:16px;font-size:12px;left:491.00px;transform-origin:0 50%;transform:scaleX(1.0568);">Sopst...</span>
<span class="t" style="top:148.50px;height:16px;line-height:16px;font-size:12px;left:540.20px;transform-origin:0 50%;transform:scaleX(1.0724);">Šif.v...</span>
<span class="t" style="top:148.50px;height:16px;line-height:16px;font-size:12px;left:583.30px;transform-origin:0 50%;transform:scaleX(0.9858);">Ostali...</span>
<span class="t" style="top:148.50px;height:16px;line-height:16px;font-size:12px;left:631.80px;transform-origin:0 50%;transform:scaleX(0.9795);">Tip kursa</span>
<span class="t" style="top:168.70px;height:15px;line-height:15px;font-size:11px;left:235.30px;transform-origin:0 50%;transform:scaleX(0.9080);">CENOVNIK 1</span>
<span class="t" style="top:168.70px;height:15px;line-height:15px;font-size:11px;left:631.80px;transform-origin:0 50%;transform:scaleX(0.9579);">Srednji</span>
<div class="a " style="left:458px;top:169.5px;width:15.5px;height:13.5px;background:#ececec;border:1px solid #d3d3d3;border-radius:4px;"></div>
<div class="a " style="left:505px;top:169.5px;width:15.5px;height:13.5px;background:#ececec;border:1px solid #d3d3d3;border-radius:4px;"></div>
<div class="a " style="left:596px;top:169.5px;width:15.5px;height:13.5px;background:#ececec;border:1px solid #d3d3d3;border-radius:4px;"></div>
<div class="a " style="left:1530px;top:146px;width:386px;height:20px;background:#e9e9e9;"></div>
<div class="a " style="left:1530px;top:166px;width:386px;height:1px;background:#ababab;"></div>
<div class="a " style="left:1551px;top:147px;width:1px;height:19px;background:#ababab;"></div>
<div class="a " style="left:1719px;top:147px;width:1px;height:19px;background:#ababab;"></div>
<div class="a " style="left:1785px;top:147px;width:1px;height:19px;background:#ababab;"></div>
<div class="a " style="left:1850px;top:147px;width:1px;height:19px;background:#ababab;"></div>
<span class="t" style="top:148.50px;height:16px;line-height:16px;font-size:12px;left:1532.70px;transform-origin:0 50%;transform:scaleX(0.9749);">O..</span>
<span class="t" style="top:148.50px;height:16px;line-height:16px;font-size:12px;left:1554.00px;transform-origin:0 50%;">Naziv objekta</span>
<span class="t" style="top:148.50px;height:16px;line-height:16px;font-size:12px;left:1722.00px;transform-origin:0 50%;transform:scaleX(0.9811);">Nab.cena</span>
<span class="t" style="top:148.50px;height:16px;line-height:16px;font-size:12px;left:1788.40px;transform-origin:0 50%;transform:scaleX(0.9857);">VP cena</span>
<span class="t" style="top:148.50px;height:16px;line-height:16px;font-size:12px;left:1853.00px;transform-origin:0 50%;transform:scaleX(0.9674);">MP cena</span>
<span class="t" style="top:222.50px;height:15px;line-height:15px;font-size:11px;left:1655.40px;transform-origin:0 50%;transform:scaleX(0.9856);">&lt;Nema podataka za prikaz&gt;</span>
<div class="a " style="left:1528px;top:146px;width:1px;height:148px;background:#e1e1e1;"></div>
<div class="a " style="left:1917px;top:121px;width:1.5px;height:882px;background:#d2d2d2;"></div>
<svg class="a" style="left:238px;top:275px;" width="14" height="14" viewBox="0 0 14 14" preserveAspectRatio="none"><path d="M1 3v8M7 3L3 7l4 4M12 3L8 7l4 4" fill="none" stroke="#5a5a5a" stroke-width="1.100"/></svg>
<svg class="a" style="left:263px;top:275px;" width="12" height="14" viewBox="0 0 12 14" preserveAspectRatio="none"><path d="M5.500 3L1.500 7l4 4M10.500 3L6.500 7l4 4" fill="none" stroke="#5a5a5a" stroke-width="1.100"/></svg>
<svg class="a" style="left:289px;top:275px;" width="8" height="14" viewBox="0 0 8 14" preserveAspectRatio="none"><path d="M5.500 3L1.500 7l4 4" fill="none" stroke="#5a5a5a" stroke-width="1.100"/></svg>
<span class="t" style="top:274.00px;height:17px;line-height:17px;font-size:13px;left:312.20px;transform-origin:0 50%;transform:scaleX(0.9684);">1 od 1</span>
<svg class="a" style="left:363px;top:275px;" width="8" height="14" viewBox="0 0 8 14" preserveAspectRatio="none"><path d="M1.500 3L5.500 7l-4 4" fill="none" stroke="#5a5a5a" stroke-width="1.100"/></svg>
<svg class="a" style="left:385px;top:275px;" width="12" height="14" viewBox="0 0 12 14" preserveAspectRatio="none"><path d="M1.500 3L5.500 7l-4 4M6.500 3L10.500 7l-4 4" fill="none" stroke="#5a5a5a" stroke-width="1.100"/></svg>
<svg class="a" style="left:408px;top:275px;" width="14" height="14" viewBox="0 0 14 14" preserveAspectRatio="none"><path d="M1.500 3L5.500 7l-4 4M6.500 3L10.500 7l-4 4M12.500 3v8" fill="none" stroke="#5a5a5a" stroke-width="1.100"/></svg>
<svg class="a" style="left:433.5px;top:275px;" width="10" height="14" viewBox="0 0 10 14" preserveAspectRatio="none"><path d="M5 2.800v8.400M.8 7h8.400" stroke="#13976b" stroke-width="2.100" fill="none"/></svg>
<svg class="a" style="left:457.5px;top:275px;" width="10" height="14" viewBox="0 0 10 14" preserveAspectRatio="none"><path d="M.8 7h8.400" stroke="#ee4668" stroke-width="2.100" fill="none"/></svg>
<svg class="a" style="left:481px;top:275px;" width="12" height="14" viewBox="0 0 12 14" preserveAspectRatio="none"><path d="M2 12l.6-3L9 2.200l2.200 2.200L4.800 11.300zM7.600 3.600l2.200 2.200" fill="none" stroke="#2a2a2a" stroke-width="1.100" stroke-linejoin="round"/></svg>
<svg class="a" style="left:505px;top:275px;" width="13" height="14" viewBox="0 0 13 14" preserveAspectRatio="none"><path d="M1 8l3.500 3.500L12 3" fill="none" stroke="#7c7c7c" stroke-width="1"/></svg>
<svg class="a" style="left:529.5px;top:275px;" width="11" height="14" viewBox="0 0 11 14" preserveAspectRatio="none"><path d="M1.200 2.700l8.600 8.600M9.800 2.700l-8.600 8.600" fill="none" stroke="#777" stroke-width="1"/></svg>
<svg class="a" style="left:553px;top:275px;" width="12" height="14" viewBox="0 0 12 14" preserveAspectRatio="none"><path d="M6.500 3L10.500 6l-4 3.500M10.500 6H4A2.500 2.500 0 0 0 1.500 8.500V10" fill="none" stroke="#2a2a2a" stroke-width="1.100"/></svg>
<svg class="a" style="left:577px;top:275px;" width="10" height="14" viewBox="0 0 10 14" preserveAspectRatio="none"><path d="M5 2.300v9.400M.3 7h9.400M1.700 3.700l6.600 6.600M1.700 10.300l6.600-6.600" fill="none" stroke="#1a1a1a" stroke-width="1.100"/></svg>
<svg class="a" style="left:599px;top:275px;" width="13" height="14" viewBox="0 0 13 14" preserveAspectRatio="none"><path d="M8 3.900v9.200M3.400 8.500h9.200M4.700 5.200l6.600 6.600M4.700 11.800l6.600-6.600" fill="none" stroke="#5a5a5a" stroke-width="1"/><path d="M.9 .6v4.600l2.800-2.500z" fill="none" stroke="#666" stroke-width=".8"/></svg>
<svg class="a" style="left:624px;top:275px;" width="14" height="14" viewBox="0 0 14 14" preserveAspectRatio="none"><path d="M.9 2.500h12.200L8.300 7.900V12.300H5.700V7.900z" fill="none" stroke="#1a1a1a" stroke-width="1.200" stroke-linejoin="miter"/></svg>
<div class="a " style="left:653px;top:273px;width:874px;height:19px;background:#e2e2e2;"></div>
<svg class="a" style="left:238px;top:953px;" width="14" height="14" viewBox="0 0 14 14" preserveAspectRatio="none"><path d="M1 3v8M7 3L3 7l4 4M12 3L8 7l4 4" fill="none" stroke="#5a5a5a" stroke-width="1.100"/></svg>
<svg class="a" style="left:263px;top:953px;" width="12" height="14" viewBox="0 0 12 14" preserveAspectRatio="none"><path d="M5.500 3L1.500 7l4 4M10.500 3L6.500 7l4 4" fill="none" stroke="#5a5a5a" stroke-width="1.100"/></svg>
<svg class="a" style="left:289px;top:953px;" width="8" height="14" viewBox="0 0 8 14" preserveAspectRatio="none"><path d="M5.500 3L1.500 7l4 4" fill="none" stroke="#5a5a5a" stroke-width="1.100"/></svg>
<span class="t" style="top:952.00px;height:17px;line-height:17px;font-size:13px;left:312.00px;transform-origin:0 50%;transform:scaleX(0.9841);">86 od 92</span>
<svg class="a" style="left:377px;top:953px;" width="8" height="14" viewBox="0 0 8 14" preserveAspectRatio="none"><path d="M1.500 3L5.500 7l-4 4" fill="none" stroke="#5a5a5a" stroke-width="1.100"/></svg>
<svg class="a" style="left:399px;top:953px;" width="12" height="14" viewBox="0 0 12 14" preserveAspectRatio="none"><path d="M1.500 3L5.500 7l-4 4M6.500 3L10.500 7l-4 4" fill="none" stroke="#5a5a5a" stroke-width="1.100"/></svg>
<svg class="a" style="left:423px;top:953px;" width="14" height="14" viewBox="0 0 14 14" preserveAspectRatio="none"><path d="M1.500 3L5.500 7l-4 4M6.500 3L10.500 7l-4 4M12.500 3v8" fill="none" stroke="#5a5a5a" stroke-width="1.100"/></svg>
<svg class="a" style="left:447.5px;top:953px;" width="10" height="14" viewBox="0 0 10 14" preserveAspectRatio="none"><path d="M5 2.800v8.400M.8 7h8.400" stroke="#13976b" stroke-width="2.100" fill="none"/></svg>
<svg class="a" style="left:471.5px;top:953px;" width="10" height="14" viewBox="0 0 10 14" preserveAspectRatio="none"><path d="M.8 7h8.400" stroke="#ee4668" stroke-width="2.100" fill="none"/></svg>
<svg class="a" style="left:495px;top:953px;" width="12" height="14" viewBox="0 0 12 14" preserveAspectRatio="none"><path d="M2 12l.6-3L9 2.200l2.200 2.200L4.800 11.300zM7.600 3.600l2.200 2.200" fill="none" stroke="#2a2a2a" stroke-width="1.100" stroke-linejoin="round"/></svg>
<svg class="a" style="left:518.5px;top:953px;" width="13" height="14" viewBox="0 0 13 14" preserveAspectRatio="none"><path d="M1 8l3.500 3.500L12 3" fill="none" stroke="#7c7c7c" stroke-width="1"/></svg>
<svg class="a" style="left:543.5px;top:953px;" width="11" height="14" viewBox="0 0 11 14" preserveAspectRatio="none"><path d="M1.200 2.700l8.600 8.600M9.800 2.700l-8.600 8.600" fill="none" stroke="#777" stroke-width="1"/></svg>
<svg class="a" style="left:567px;top:953px;" width="12" height="14" viewBox="0 0 12 14" preserveAspectRatio="none"><path d="M6.500 3L10.500 6l-4 3.500M10.500 6H4A2.500 2.500 0 0 0 1.500 8.500V10" fill="none" stroke="#2a2a2a" stroke-width="1.100"/></svg>
<svg class="a" style="left:591px;top:953px;" width="10" height="14" viewBox="0 0 10 14" preserveAspectRatio="none"><path d="M5 2.300v9.400M.3 7h9.400M1.700 3.700l6.600 6.600M1.700 10.300l6.600-6.600" fill="none" stroke="#1a1a1a" stroke-width="1.100"/></svg>
<svg class="a" style="left:613px;top:953px;" width="13" height="14" viewBox="0 0 13 14" preserveAspectRatio="none"><path d="M8 3.900v9.200M3.400 8.500h9.200M4.700 5.200l6.600 6.600M4.700 11.800l6.600-6.600" fill="none" stroke="#5a5a5a" stroke-width="1"/><path d="M.9 .6v4.600l2.800-2.500z" fill="none" stroke="#666" stroke-width=".8"/></svg>
<svg class="a" style="left:638.5px;top:953px;" width="14" height="14" viewBox="0 0 14 14" preserveAspectRatio="none"><path d="M.9 2.500h12.200L8.300 7.900V12.300H5.700V7.900z" fill="none" stroke="#1a1a1a" stroke-width="1.200" stroke-linejoin="miter"/></svg>
<div class="a " style="left:232.5px;top:294px;width:1666.5px;height:20px;background:#e9e9e9;"></div>
<div class="a " style="left:232.5px;top:314px;width:1666.5px;height:1px;background:#ababab;"></div>
<span class="t" style="top:296.50px;height:16px;line-height:16px;font-size:12px;left:235.30px;transform-origin:0 50%;transform:scaleX(1.0277);">Objekat</span>
<span class="t" style="top:296.50px;height:16px;line-height:16px;font-size:12px;left:484.80px;transform-origin:0 50%;transform:scaleX(1.0281);">Par...</span>
<span class="t" style="top:296.50px;height:16px;line-height:16px;font-size:12px;left:521.70px;transform-origin:0 50%;transform:scaleX(1.0046);">Posl...</span>
<span class="t" style="top:296.50px;height:16px;line-height:16px;font-size:12px;left:560.80px;transform-origin:0 50%;transform:scaleX(0.9856);">Kataloški broj</span>
<span class="t" style="top:296.50px;height:16px;line-height:16px;font-size:12px;left:651.20px;transform-origin:0 50%;transform:scaleX(0.9240);">Šifra</span>
<span class="t" style="top:296.50px;height:16px;line-height:16px;font-size:12px;left:698.30px;transform-origin:0 50%;transform:scaleX(0.9396);">Naziv artikla</span>
<span class="t" style="top:296.50px;height:16px;line-height:16px;font-size:12px;left:1203.30px;transform-origin:0 50%;transform:scaleX(0.9916);">Datum OD</span>
<span class="t" style="top:296.50px;height:16px;line-height:16px;font-size:12px;left:1267.10px;transform-origin:0 50%;">Datum DO</span>
<span class="t" style="top:296.50px;height:16px;line-height:16px;font-size:12px;left:1331.30px;transform-origin:0 50%;transform:scaleX(0.9558);">VP Cena</span>
<span class="t" style="top:296.50px;height:16px;line-height:16px;font-size:12px;left:1407.70px;transform-origin:0 50%;transform:scaleX(0.9705);">Barkod</span>
<span class="t" style="top:296.50px;height:16px;line-height:16px;font-size:12px;left:1502.30px;transform-origin:0 50%;transform:scaleX(0.9912);">Naziv objekta</span>
<span class="t" style="top:296.50px;height:16px;line-height:16px;font-size:12px;left:1628.00px;transform-origin:0 50%;">Naziv poslovnog partnera</span>
<div class="a" style="left:1797px;top:294px;width:102px;height:20px;overflow:hidden"><span class="t" style="left:3.2px;top:2.5px;height:16px;line-height:16px;font-size:12px;transform-origin:0 50%;transform:scaleX(.975)">Naziv poslovne jedinice</span></div>
<svg class="a" style="left:453px;top:298px;" width="12" height="12" viewBox="0 0 12 12" preserveAspectRatio="none"><path d="M1 3.500h11M3 6.500h7M4.800 9.500h3.400" stroke="#1a1a1a" stroke-width="1"/></svg>
<svg class="a" style="left:468px;top:297px;" width="11" height="13" viewBox="0 0 11 13" preserveAspectRatio="none"><path d="M.8 1.700h9.400L6.500 6.200V10.700H4.500V6.200z" fill="none" stroke="#2b579a" stroke-width="1.200" stroke-linejoin="miter"/></svg>
<div class="a" style="left:232.5px;top:315px;width:1666.5px;height:627px;overflow:hidden">
<div class="a" style="left:0;top:0px;width:1666.5px;height:18px;background:#e8e8e8"></div>
<div class="a" style="left:0;top:18px;width:1666.5px;height:1px;background:#ababab"></div>
<span class="t" style="top:1.8px;height:15px;line-height:15px;font-size:11px;color:#111;right:1420.4px;transform-origin:100% 50%;transform:scaleX(0.985);">010</span>
<span class="t" style="top:1.8px;height:15px;line-height:15px;font-size:11px;color:#111;right:1207.0px;transform-origin:100% 50%;transform:scaleX(0.99);">011344</span>
<span class="t" style="top:1.8px;height:15px;line-height:15px;font-size:11px;color:#111;left:465.8px;transform-origin:0 50%;transform:scaleX(0.9022);">DUEL OMEKSIVAC BLUE DIAMOND 1.7L</span>
<span class="t" style="top:1.8px;height:15px;line-height:15px;font-size:11px;color:#111;right:497.8px;transform-origin:100% 50%;transform:scaleX(0.985);">458,0000</span>
<span class="t" style="top:1.8px;height:15px;line-height:15px;font-size:11px;color:#111;left:1176.0px;transform-origin:0 50%;transform:scaleX(0.985);">8606015845623</span>
<span class="t" style="top:1.8px;height:15px;line-height:15px;font-size:11px;color:#111;left:1269.8px;transform-origin:0 50%;transform:scaleX(0.895);">OBJEKAT</span>
<div class="a" style="left:0;top:19px;width:1666.5px;height:18px;background:#f5f5f5"></div>
<div class="a" style="left:0;top:37px;width:1666.5px;height:1px;background:#ababab"></div>
<span class="t" style="top:20.8px;height:15px;line-height:15px;font-size:11px;color:#111;right:1420.4px;transform-origin:100% 50%;transform:scaleX(0.985);">010</span>
<span class="t" style="top:20.8px;height:15px;line-height:15px;font-size:11px;color:#111;right:1207.0px;transform-origin:100% 50%;transform:scaleX(0.99);">011403</span>
<span class="t" style="top:20.8px;height:15px;line-height:15px;font-size:11px;color:#111;left:465.8px;transform-origin:0 50%;transform:scaleX(0.9254);">PALOMA TOALET PAPIR CLASSIC 3SL 10/1</span>
<span class="t" style="top:20.8px;height:15px;line-height:15px;font-size:11px;color:#111;right:497.8px;transform-origin:100% 50%;transform:scaleX(0.985);">192,0000</span>
<span class="t" style="top:20.8px;height:15px;line-height:15px;font-size:11px;color:#111;left:1176.0px;transform-origin:0 50%;transform:scaleX(0.985);">3838952023740</span>
<span class="t" style="top:20.8px;height:15px;line-height:15px;font-size:11px;color:#111;left:1269.8px;transform-origin:0 50%;transform:scaleX(0.895);">OBJEKAT</span>
<div class="a" style="left:0;top:38px;width:1666.5px;height:18px;background:#e8e8e8"></div>
<div class="a" style="left:0;top:56px;width:1666.5px;height:1px;background:#ababab"></div>
<span class="t" style="top:39.8px;height:15px;line-height:15px;font-size:11px;color:#111;right:1420.4px;transform-origin:100% 50%;transform:scaleX(0.985);">010</span>
<span class="t" style="top:39.8px;height:15px;line-height:15px;font-size:11px;color:#111;right:1207.0px;transform-origin:100% 50%;transform:scaleX(0.99);">011406</span>
<span class="t" style="top:39.8px;height:15px;line-height:15px;font-size:11px;color:#111;left:465.8px;transform-origin:0 50%;transform:scaleX(0.888);">DEO NIVEA SPRAY MEN EXTREME SURFING 150ML</span>
<span class="t" style="top:39.8px;height:15px;line-height:15px;font-size:11px;color:#111;right:497.8px;transform-origin:100% 50%;transform:scaleX(0.985);">634,0000</span>
<span class="t" style="top:39.8px;height:15px;line-height:15px;font-size:11px;color:#111;left:1176.0px;transform-origin:0 50%;transform:scaleX(0.985);">4005900886163</span>
<span class="t" style="top:39.8px;height:15px;line-height:15px;font-size:11px;color:#111;left:1269.8px;transform-origin:0 50%;transform:scaleX(0.895);">OBJEKAT</span>
<div class="a" style="left:0;top:57px;width:1666.5px;height:18px;background:#f5f5f5"></div>
<div class="a" style="left:0;top:75px;width:1666.5px;height:1px;background:#ababab"></div>
<span class="t" style="top:58.8px;height:15px;line-height:15px;font-size:11px;color:#111;right:1420.4px;transform-origin:100% 50%;transform:scaleX(0.985);">010</span>
<span class="t" style="top:58.8px;height:15px;line-height:15px;font-size:11px;color:#111;right:1207.0px;transform-origin:100% 50%;transform:scaleX(0.99);">015024</span>
<span class="t" style="top:58.8px;height:15px;line-height:15px;font-size:11px;color:#111;left:465.8px;transform-origin:0 50%;transform:scaleX(0.907);">NIVEA FOR MEN PENA ZA BRIJANJE SENSITIVE 200ML</span>
<span class="t" style="top:58.8px;height:15px;line-height:15px;font-size:11px;color:#111;right:497.8px;transform-origin:100% 50%;transform:scaleX(0.985);">235,0000</span>
<span class="t" style="top:58.8px;height:15px;line-height:15px;font-size:11px;color:#111;left:1176.0px;transform-origin:0 50%;transform:scaleX(0.985);">4005808222704</span>
<span class="t" style="top:58.8px;height:15px;line-height:15px;font-size:11px;color:#111;left:1269.8px;transform-origin:0 50%;transform:scaleX(0.895);">OBJEKAT</span>
<div class="a" style="left:0;top:76px;width:1666.5px;height:18px;background:#4077cb"></div>
<div class="a" style="left:0;top:94px;width:1666.5px;height:1px;background:#ababab"></div>
<span class="t" style="top:77.8px;height:15px;line-height:15px;font-size:11px;color:#f2f6ff;right:1420.4px;transform-origin:100% 50%;transform:scaleX(0.985);">010</span>
<span class="t" style="top:77.8px;height:15px;line-height:15px;font-size:11px;color:#f2f6ff;right:1207.0px;transform-origin:100% 50%;transform:scaleX(0.99);">015054</span>
<span class="t" style="top:77.8px;height:15px;line-height:15px;font-size:11px;color:#f2f6ff;left:465.8px;transform-origin:0 50%;transform:scaleX(0.8944);">AJAX LAGOON FLOWERS 1L</span>
<span class="t" style="top:77.8px;height:15px;line-height:15px;font-size:11px;color:#f2f6ff;right:497.8px;transform-origin:100% 50%;transform:scaleX(0.985);">236,0000</span>
<span class="t" style="top:77.8px;height:15px;line-height:15px;font-size:11px;color:#f2f6ff;left:1176.0px;transform-origin:0 50%;transform:scaleX(0.985);">5900273472908</span>
<span class="t" style="top:77.8px;height:15px;line-height:15px;font-size:11px;color:#f2f6ff;left:1269.8px;transform-origin:0 50%;transform:scaleX(0.895);">OBJEKAT</span>
<div class="a" style="left:0;top:95px;width:1666.5px;height:18px;background:#4077cb"></div>
<div class="a" style="left:0;top:113px;width:1666.5px;height:1px;background:#ababab"></div>
<span class="t" style="top:96.8px;height:15px;line-height:15px;font-size:11px;color:#f2f6ff;right:1420.4px;transform-origin:100% 50%;transform:scaleX(0.985);">010</span>
<span class="t" style="top:96.8px;height:15px;line-height:15px;font-size:11px;color:#f2f6ff;right:1207.0px;transform-origin:100% 50%;transform:scaleX(0.99);">015055</span>
<span class="t" style="top:96.8px;height:15px;line-height:15px;font-size:11px;color:#f2f6ff;left:465.8px;transform-origin:0 50%;transform:scaleX(0.8901);">AJAX SPRING FLOWERS 1L</span>
<span class="t" style="top:96.8px;height:15px;line-height:15px;font-size:11px;color:#f2f6ff;right:497.8px;transform-origin:100% 50%;transform:scaleX(0.985);">347,0000</span>
<span class="t" style="top:96.8px;height:15px;line-height:15px;font-size:11px;color:#f2f6ff;left:1176.0px;transform-origin:0 50%;transform:scaleX(0.985);">8718951278424</span>
<span class="t" style="top:96.8px;height:15px;line-height:15px;font-size:11px;color:#f2f6ff;left:1269.8px;transform-origin:0 50%;transform:scaleX(0.895);">OBJEKAT</span>
<div class="a" style="left:0;top:114px;width:1666.5px;height:18px;background:#4077cb"></div>
<div class="a" style="left:0;top:132px;width:1666.5px;height:1px;background:#ababab"></div>
<span class="t" style="top:115.8px;height:15px;line-height:15px;font-size:11px;color:#f2f6ff;right:1420.4px;transform-origin:100% 50%;transform:scaleX(0.985);">010</span>
<span class="t" style="top:115.8px;height:15px;line-height:15px;font-size:11px;color:#f2f6ff;right:1207.0px;transform-origin:100% 50%;transform:scaleX(0.99);">015065</span>
<span class="t" style="top:115.8px;height:15px;line-height:15px;font-size:11px;color:#f2f6ff;left:465.8px;transform-origin:0 50%;transform:scaleX(0.9132);">AJAX BOOST LAVANDA 1L</span>
<span class="t" style="top:115.8px;height:15px;line-height:15px;font-size:11px;color:#f2f6ff;right:497.8px;transform-origin:100% 50%;transform:scaleX(0.985);">535,0000</span>
<span class="t" style="top:115.8px;height:15px;line-height:15px;font-size:11px;color:#f2f6ff;left:1176.0px;transform-origin:0 50%;transform:scaleX(0.985);">8718951190221</span>
<span class="t" style="top:115.8px;height:15px;line-height:15px;font-size:11px;color:#f2f6ff;left:1269.8px;transform-origin:0 50%;transform:scaleX(0.895);">OBJEKAT</span>
<div class="a" style="left:0;top:133px;width:1666.5px;height:18px;background:#4077cb"></div>
<div class="a" style="left:0;top:151px;width:1666.5px;height:1px;background:#ababab"></div>
<span class="t" style="top:134.8px;height:15px;line-height:15px;font-size:11px;color:#f2f6ff;right:1420.4px;transform-origin:100% 50%;transform:scaleX(0.985);">010</span>
<span class="t" style="top:134.8px;height:15px;line-height:15px;font-size:11px;color:#f2f6ff;right:1207.0px;transform-origin:100% 50%;transform:scaleX(0.99);">015079</span>
<span class="t" style="top:134.8px;height:15px;line-height:15px;font-size:11px;color:#f2f6ff;left:465.8px;transform-origin:0 50%;transform:scaleX(0.8872);">AJAX BOST LEMON 1L</span>
<span class="t" style="top:134.8px;height:15px;line-height:15px;font-size:11px;color:#f2f6ff;right:497.8px;transform-origin:100% 50%;transform:scaleX(0.985);">636,0000</span>
<span class="t" style="top:134.8px;height:15px;line-height:15px;font-size:11px;color:#f2f6ff;left:1176.0px;transform-origin:0 50%;transform:scaleX(0.985);">8718951278905</span>
<span class="t" style="top:134.8px;height:15px;line-height:15px;font-size:11px;color:#f2f6ff;left:1269.8px;transform-origin:0 50%;transform:scaleX(0.895);">OBJEKAT</span>
<div class="a" style="left:0;top:152px;width:1666.5px;height:18px;background:#4077cb"></div>
<div class="a" style="left:0;top:170px;width:1666.5px;height:1px;background:#ababab"></div>
<span class="t" style="top:153.8px;height:15px;line-height:15px;font-size:11px;color:#f2f6ff;right:1420.4px;transform-origin:100% 50%;transform:scaleX(0.985);">010</span>
<span class="t" style="top:153.8px;height:15px;line-height:15px;font-size:11px;color:#f2f6ff;right:1207.0px;transform-origin:100% 50%;transform:scaleX(0.99);">015259</span>
<span class="t" style="top:153.8px;height:15px;line-height:15px;font-size:11px;color:#f2f6ff;left:465.8px;transform-origin:0 50%;transform:scaleX(0.9063);">NIVEA BODY MILK 400ML</span>
<span class="t" style="top:153.8px;height:15px;line-height:15px;font-size:11px;color:#f2f6ff;right:497.8px;transform-origin:100% 50%;transform:scaleX(0.985);">346,0000</span>
<span class="t" style="top:153.8px;height:15px;line-height:15px;font-size:11px;color:#f2f6ff;left:1176.0px;transform-origin:0 50%;transform:scaleX(0.985);">4005808704644</span>
<span class="t" style="top:153.8px;height:15px;line-height:15px;font-size:11px;color:#f2f6ff;left:1269.8px;transform-origin:0 50%;transform:scaleX(0.895);">OBJEKAT</span>
<div class="a" style="left:0;top:171px;width:1666.5px;height:18px;background:#4077cb"></div>
<div class="a" style="left:0;top:189px;width:1666.5px;height:1px;background:#ababab"></div>
<span class="t" style="top:172.8px;height:15px;line-height:15px;font-size:11px;color:#f2f6ff;right:1420.4px;transform-origin:100% 50%;transform:scaleX(0.985);">010</span>
<span class="t" style="top:172.8px;height:15px;line-height:15px;font-size:11px;color:#f2f6ff;right:1207.0px;transform-origin:100% 50%;transform:scaleX(0.99);">015260</span>
<span class="t" style="top:172.8px;height:15px;line-height:15px;font-size:11px;color:#f2f6ff;left:465.8px;transform-origin:0 50%;transform:scaleX(0.8843);">NIVEA GEL TUS ENERGY 500ML</span>
<span class="t" style="top:172.8px;height:15px;line-height:15px;font-size:11px;color:#f2f6ff;right:497.8px;transform-origin:100% 50%;transform:scaleX(0.985);">634,0000</span>
<span class="t" style="top:172.8px;height:15px;line-height:15px;font-size:11px;color:#f2f6ff;left:1176.0px;transform-origin:0 50%;transform:scaleX(0.985);">4005900047700</span>
<span class="t" style="top:172.8px;height:15px;line-height:15px;font-size:11px;color:#f2f6ff;left:1269.8px;transform-origin:0 50%;transform:scaleX(0.895);">OBJEKAT</span>
<div class="a" style="left:0;top:190px;width:1666.5px;height:18px;background:#4077cb"></div>
<div class="a" style="left:0;top:208px;width:1666.5px;height:1px;background:#ababab"></div>
<span class="t" style="top:191.8px;height:15px;line-height:15px;font-size:11px;color:#f2f6ff;right:1420.4px;transform-origin:100% 50%;transform:scaleX(0.985);">010</span>
<span class="t" style="top:191.8px;height:15px;line-height:15px;font-size:11px;color:#f2f6ff;right:1207.0px;transform-origin:100% 50%;transform:scaleX(0.99);">015261</span>
<span class="t" style="top:191.8px;height:15px;line-height:15px;font-size:11px;color:#f2f6ff;left:465.8px;transform-origin:0 50%;transform:scaleX(0.9078);">NIVEA KREMA 75ML</span>
<span class="t" style="top:191.8px;height:15px;line-height:15px;font-size:11px;color:#f2f6ff;right:497.8px;transform-origin:100% 50%;transform:scaleX(0.985);">123,0000</span>
<span class="t" style="top:191.8px;height:15px;line-height:15px;font-size:11px;color:#f2f6ff;left:1176.0px;transform-origin:0 50%;transform:scaleX(0.985);">42163176</span>
<span class="t" style="top:191.8px;height:15px;line-height:15px;font-size:11px;color:#f2f6ff;left:1269.8px;transform-origin:0 50%;transform:scaleX(0.895);">OBJEKAT</span>
<div class="a" style="left:0;top:209px;width:1666.5px;height:18px;background:#4077cb"></div>
<div class="a" style="left:0;top:227px;width:1666.5px;height:1px;background:#ababab"></div>
<span class="t" style="top:210.8px;height:15px;line-height:15px;font-size:11px;color:#f2f6ff;right:1420.4px;transform-origin:100% 50%;transform:scaleX(0.985);">010</span>
<span class="t" style="top:210.8px;height:15px;line-height:15px;font-size:11px;color:#f2f6ff;right:1207.0px;transform-origin:100% 50%;transform:scaleX(0.99);">015262</span>
<span class="t" style="top:210.8px;height:15px;line-height:15px;font-size:11px;color:#f2f6ff;left:465.8px;transform-origin:0 50%;transform:scaleX(0.9107);">DEO NIVEA B&amp;W INVISIBLE ZEN 150ML</span>
<span class="t" style="top:210.8px;height:15px;line-height:15px;font-size:11px;color:#f2f6ff;right:497.8px;transform-origin:100% 50%;transform:scaleX(0.985);">242,0000</span>
<span class="t" style="top:210.8px;height:15px;line-height:15px;font-size:11px;color:#f2f6ff;left:1176.0px;transform-origin:0 50%;transform:scaleX(0.985);">4005808729746</span>
<span class="t" style="top:210.8px;height:15px;line-height:15px;font-size:11px;color:#f2f6ff;left:1269.8px;transform-origin:0 50%;transform:scaleX(0.895);">OBJEKAT</span>
<div class="a" style="left:0;top:228px;width:1666.5px;height:18px;background:#e8e8e8"></div>
<div class="a" style="left:0;top:246px;width:1666.5px;height:1px;background:#ababab"></div>
<span class="t" style="top:229.8px;height:15px;line-height:15px;font-size:11px;color:#111;right:1420.4px;transform-origin:100% 50%;transform:scaleX(0.985);">010</span>
<span class="t" style="top:229.8px;height:15px;line-height:15px;font-size:11px;color:#111;right:1207.0px;transform-origin:100% 50%;transform:scaleX(0.99);">016011</span>
<span class="t" style="top:229.8px;height:15px;line-height:15px;font-size:11px;color:#111;left:465.8px;transform-origin:0 50%;transform:scaleX(0.9158);">AXEL INOX SA PUMP.500ML</span>
<span class="t" style="top:229.8px;height:15px;line-height:15px;font-size:11px;color:#111;right:497.8px;transform-origin:100% 50%;transform:scaleX(0.985);">2.524,0000</span>
<span class="t" style="top:229.8px;height:15px;line-height:15px;font-size:11px;color:#111;left:1176.0px;transform-origin:0 50%;transform:scaleX(0.985);">8606003130618</span>
<span class="t" style="top:229.8px;height:15px;line-height:15px;font-size:11px;color:#111;left:1269.8px;transform-origin:0 50%;transform:scaleX(0.895);">OBJEKAT</span>
<div class="a" style="left:0;top:247px;width:1666.5px;height:18px;background:#f5f5f5"></div>
<div class="a" style="left:0;top:265px;width:1666.5px;height:1px;background:#ababab"></div>
<span class="t" style="top:248.8px;height:15px;line-height:15px;font-size:11px;color:#111;right:1420.4px;transform-origin:100% 50%;transform:scaleX(0.985);">010</span>
<span class="t" style="top:248.8px;height:15px;line-height:15px;font-size:11px;color:#111;right:1207.0px;transform-origin:100% 50%;transform:scaleX(0.99);">016014</span>
<span class="t" style="top:248.8px;height:15px;line-height:15px;font-size:11px;color:#111;left:465.8px;transform-origin:0 50%;transform:scaleX(0.9144);">TOALET PAPIR COTTON LIKE PREMIUM LUX 10/1</span>
<span class="t" style="top:248.8px;height:15px;line-height:15px;font-size:11px;color:#111;right:497.8px;transform-origin:100% 50%;transform:scaleX(0.985);">343,0000</span>
<span class="t" style="top:248.8px;height:15px;line-height:15px;font-size:11px;color:#111;left:1176.0px;transform-origin:0 50%;transform:scaleX(0.985);">8606110850782</span>
<span class="t" style="top:248.8px;height:15px;line-height:15px;font-size:11px;color:#111;left:1269.8px;transform-origin:0 50%;transform:scaleX(0.895);">OBJEKAT</span>
<div class="a" style="left:0;top:266px;width:1666.5px;height:18px;background:#e8e8e8"></div>
<div class="a" style="left:0;top:284px;width:1666.5px;height:1px;background:#ababab"></div>
<span class="t" style="top:267.8px;height:15px;line-height:15px;font-size:11px;color:#111;right:1420.4px;transform-origin:100% 50%;transform:scaleX(0.985);">010</span>
<span class="t" style="top:267.8px;height:15px;line-height:15px;font-size:11px;color:#111;right:1207.0px;transform-origin:100% 50%;transform:scaleX(0.99);">016024</span>
<span class="t" style="top:267.8px;height:15px;line-height:15px;font-size:11px;color:#111;left:465.8px;transform-origin:0 50%;transform:scaleX(0.911);">VASELINE SAPUN HEALTY BRIGHT 75GR SA VITAMINO.</span>
<span class="t" style="top:267.8px;height:15px;line-height:15px;font-size:11px;color:#111;right:497.8px;transform-origin:100% 50%;transform:scaleX(0.985);">215,0000</span>
<span class="t" style="top:267.8px;height:15px;line-height:15px;font-size:11px;color:#111;left:1176.0px;transform-origin:0 50%;transform:scaleX(0.985);">8886467060823</span>
<span class="t" style="top:267.8px;height:15px;line-height:15px;font-size:11px;color:#111;left:1269.8px;transform-origin:0 50%;transform:scaleX(0.895);">OBJEKAT</span>
<div class="a" style="left:0;top:285px;width:1666.5px;height:18px;background:#f5f5f5"></div>
<div class="a" style="left:0;top:303px;width:1666.5px;height:1px;background:#ababab"></div>
<span class="t" style="top:286.8px;height:15px;line-height:15px;font-size:11px;color:#111;right:1420.4px;transform-origin:100% 50%;transform:scaleX(0.985);">010</span>
<span class="t" style="top:286.8px;height:15px;line-height:15px;font-size:11px;color:#111;right:1207.0px;transform-origin:100% 50%;transform:scaleX(0.99);">016025</span>
<span class="t" style="top:286.8px;height:15px;line-height:15px;font-size:11px;color:#111;left:465.8px;transform-origin:0 50%;transform:scaleX(0.9041);">VASELINE SAPUN TOTAL MOISTUTE 75GR SOJA</span>
<span class="t" style="top:286.8px;height:15px;line-height:15px;font-size:11px;color:#111;right:497.8px;transform-origin:100% 50%;transform:scaleX(0.985);">434,0000</span>
<span class="t" style="top:286.8px;height:15px;line-height:15px;font-size:11px;color:#111;left:1176.0px;transform-origin:0 50%;transform:scaleX(0.985);">8886467060830</span>
<span class="t" style="top:286.8px;height:15px;line-height:15px;font-size:11px;color:#111;left:1269.8px;transform-origin:0 50%;transform:scaleX(0.895);">OBJEKAT</span>
<div class="a" style="left:0;top:304px;width:1666.5px;height:18px;background:#e8e8e8"></div>
<div class="a" style="left:0;top:322px;width:1666.5px;height:1px;background:#ababab"></div>
<span class="t" style="top:305.8px;height:15px;line-height:15px;font-size:11px;color:#111;right:1420.4px;transform-origin:100% 50%;transform:scaleX(0.985);">010</span>
<span class="t" style="top:305.8px;height:15px;line-height:15px;font-size:11px;color:#111;right:1207.0px;transform-origin:100% 50%;transform:scaleX(0.99);">016246</span>
<span class="t" style="top:305.8px;height:15px;line-height:15px;font-size:11px;color:#111;left:465.8px;transform-origin:0 50%;transform:scaleX(0.8975);">DUEL 3KG JOROVAN</span>
<span class="t" style="top:305.8px;height:15px;line-height:15px;font-size:11px;color:#111;right:497.8px;transform-origin:100% 50%;transform:scaleX(0.985);">3.434,0000</span>
<span class="t" style="top:305.8px;height:15px;line-height:15px;font-size:11px;color:#111;left:1176.0px;transform-origin:0 50%;transform:scaleX(0.985);">8606013176996</span>
<span class="t" style="top:305.8px;height:15px;line-height:15px;font-size:11px;color:#111;left:1269.8px;transform-origin:0 50%;transform:scaleX(0.895);">OBJEKAT</span>
<div class="a" style="left:0;top:323px;width:1666.5px;height:18px;background:#4077cb"></div>
<div class="a" style="left:0;top:341px;width:1666.5px;height:1px;background:#ababab"></div>
<span class="t" style="top:324.8px;height:15px;line-height:15px;font-size:11px;color:#f2f6ff;right:1420.4px;transform-origin:100% 50%;transform:scaleX(0.985);">010</span>
<span class="t" style="top:324.8px;height:15px;line-height:15px;font-size:11px;color:#f2f6ff;right:1207.0px;transform-origin:100% 50%;transform:scaleX(0.99);">016303</span>
<span class="t" style="top:324.8px;height:15px;line-height:15px;font-size:11px;color:#f2f6ff;left:465.8px;transform-origin:0 50%;transform:scaleX(0.918);">NIVEA SAMPON ACT.CLEAN 250ML</span>
<span class="t" style="top:324.8px;height:15px;line-height:15px;font-size:11px;color:#f2f6ff;right:497.8px;transform-origin:100% 50%;transform:scaleX(0.985);">345,0000</span>
<span class="t" style="top:324.8px;height:15px;line-height:15px;font-size:11px;color:#f2f6ff;left:1176.0px;transform-origin:0 50%;transform:scaleX(0.985);">9005800244679</span>
<span class="t" style="top:324.8px;height:15px;line-height:15px;font-size:11px;color:#f2f6ff;left:1269.8px;transform-origin:0 50%;transform:scaleX(0.895);">OBJEKAT</span>
<div class="a" style="left:0;top:342px;width:1666.5px;height:18px;background:#e8e8e8"></div>
<div class="a" style="left:0;top:360px;width:1666.5px;height:1px;background:#ababab"></div>
<span class="t" style="top:343.8px;height:15px;line-height:15px;font-size:11px;color:#111;right:1420.4px;transform-origin:100% 50%;transform:scaleX(0.985);">010</span>
<span class="t" style="top:343.8px;height:15px;line-height:15px;font-size:11px;color:#111;right:1207.0px;transform-origin:100% 50%;transform:scaleX(0.99);">016304</span>
<span class="t" style="top:343.8px;height:15px;line-height:15px;font-size:11px;color:#111;left:465.8px;transform-origin:0 50%;transform:scaleX(0.8972);">NIVEA MLEKO SMOOTH SENS. 400ML</span>
<span class="t" style="top:343.8px;height:15px;line-height:15px;font-size:11px;color:#111;right:497.8px;transform-origin:100% 50%;transform:scaleX(0.985);">235,0000</span>
<span class="t" style="top:343.8px;height:15px;line-height:15px;font-size:11px;color:#111;left:1176.0px;transform-origin:0 50%;transform:scaleX(0.985);">9005800286778</span>
<span class="t" style="top:343.8px;height:15px;line-height:15px;font-size:11px;color:#111;left:1269.8px;transform-origin:0 50%;transform:scaleX(0.895);">OBJEKAT</span>
<div class="a" style="left:0;top:361px;width:1666.5px;height:18px;background:#f5f5f5"></div>
<div class="a" style="left:0;top:379px;width:1666.5px;height:1px;background:#ababab"></div>
<span class="t" style="top:362.8px;height:15px;line-height:15px;font-size:11px;color:#111;right:1420.4px;transform-origin:100% 50%;transform:scaleX(0.985);">010</span>
<span class="t" style="top:362.8px;height:15px;line-height:15px;font-size:11px;color:#111;right:1207.0px;transform-origin:100% 50%;transform:scaleX(0.99);">016305</span>
<span class="t" style="top:362.8px;height:15px;line-height:15px;font-size:11px;color:#111;left:465.8px;transform-origin:0 50%;transform:scaleX(0.9068);">NIVEA SHAVING CREAM</span>
<span class="t" style="top:362.8px;height:15px;line-height:15px;font-size:11px;color:#111;right:497.8px;transform-origin:100% 50%;transform:scaleX(0.985);">432,0000</span>
<span class="t" style="top:362.8px;height:15px;line-height:15px;font-size:11px;color:#111;left:1176.0px;transform-origin:0 50%;transform:scaleX(0.985);">9005800313467</span>
<span class="t" style="top:362.8px;height:15px;line-height:15px;font-size:11px;color:#111;left:1269.8px;transform-origin:0 50%;transform:scaleX(0.895);">OBJEKAT</span>
<div class="a" style="left:0;top:380px;width:1666.5px;height:18px;background:#e8e8e8"></div>
<div class="a" style="left:0;top:398px;width:1666.5px;height:1px;background:#ababab"></div>
<span class="t" style="top:381.8px;height:15px;line-height:15px;font-size:11px;color:#111;right:1420.4px;transform-origin:100% 50%;transform:scaleX(0.985);">010</span>
<span class="t" style="top:381.8px;height:15px;line-height:15px;font-size:11px;color:#111;right:1207.0px;transform-origin:100% 50%;transform:scaleX(0.99);">017982</span>
<span class="t" style="top:381.8px;height:15px;line-height:15px;font-size:11px;color:#111;left:465.8px;transform-origin:0 50%;transform:scaleX(0.9195);">POMPA KUHINJA 500ML PUMPICA</span>
<span class="t" style="top:381.8px;height:15px;line-height:15px;font-size:11px;color:#111;right:497.8px;transform-origin:100% 50%;transform:scaleX(0.985);">542,0000</span>
<span class="t" style="top:381.8px;height:15px;line-height:15px;font-size:11px;color:#111;left:1176.0px;transform-origin:0 50%;transform:scaleX(0.985);">8606015846804</span>
<span class="t" style="top:381.8px;height:15px;line-height:15px;font-size:11px;color:#111;left:1269.8px;transform-origin:0 50%;transform:scaleX(0.895);">OBJEKAT</span>
<div class="a" style="left:0;top:399px;width:1666.5px;height:18px;background:#4077cb"></div>
<div class="a" style="left:0;top:417px;width:1666.5px;height:1px;background:#ababab"></div>
<span class="t" style="top:400.8px;height:15px;line-height:15px;font-size:11px;color:#f2f6ff;right:1420.4px;transform-origin:100% 50%;transform:scaleX(0.985);">010</span>
<span class="t" style="top:400.8px;height:15px;line-height:15px;font-size:11px;color:#f2f6ff;right:1207.0px;transform-origin:100% 50%;transform:scaleX(0.99);">017983</span>
<span class="t" style="top:400.8px;height:15px;line-height:15px;font-size:11px;color:#f2f6ff;left:465.8px;transform-origin:0 50%;transform:scaleX(0.9169);">POMPA ODMASCIVAC 500ML PUMPICA</span>
<span class="t" style="top:400.8px;height:15px;line-height:15px;font-size:11px;color:#f2f6ff;right:497.8px;transform-origin:100% 50%;transform:scaleX(0.985);">323,0000</span>
<span class="t" style="top:400.8px;height:15px;line-height:15px;font-size:11px;color:#f2f6ff;left:1176.0px;transform-origin:0 50%;transform:scaleX(0.985);">8606015846767</span>
<span class="t" style="top:400.8px;height:15px;line-height:15px;font-size:11px;color:#f2f6ff;left:1269.8px;transform-origin:0 50%;transform:scaleX(0.895);">OBJEKAT</span>
<div class="a" style="left:0;top:418px;width:1666.5px;height:18px;background:#e8e8e8"></div>
<div class="a" style="left:0;top:436px;width:1666.5px;height:1px;background:#ababab"></div>
<span class="t" style="top:419.8px;height:15px;line-height:15px;font-size:11px;color:#111;right:1420.4px;transform-origin:100% 50%;transform:scaleX(0.985);">010</span>
<span class="t" style="top:419.8px;height:15px;line-height:15px;font-size:11px;color:#111;right:1207.0px;transform-origin:100% 50%;transform:scaleX(0.99);">017984</span>
<span class="t" style="top:419.8px;height:15px;line-height:15px;font-size:11px;color:#111;left:465.8px;transform-origin:0 50%;transform:scaleX(0.9194);">POMPA KUPATILO 500ML PUMPICA</span>
<span class="t" style="top:419.8px;height:15px;line-height:15px;font-size:11px;color:#111;right:497.8px;transform-origin:100% 50%;transform:scaleX(0.985);">525,0000</span>
<span class="t" style="top:419.8px;height:15px;line-height:15px;font-size:11px;color:#111;left:1176.0px;transform-origin:0 50%;transform:scaleX(0.985);">8606015846781</span>
<span class="t" style="top:419.8px;height:15px;line-height:15px;font-size:11px;color:#111;left:1269.8px;transform-origin:0 50%;transform:scaleX(0.895);">OBJEKAT</span>
<div class="a" style="left:0;top:437px;width:1666.5px;height:18px;background:#4077cb"></div>
<div class="a" style="left:0;top:455px;width:1666.5px;height:1px;background:#ababab"></div>
<span class="t" style="top:438.8px;height:15px;line-height:15px;font-size:11px;color:#f2f6ff;right:1420.4px;transform-origin:100% 50%;transform:scaleX(0.985);">010</span>
<span class="t" style="top:438.8px;height:15px;line-height:15px;font-size:11px;color:#f2f6ff;right:1207.0px;transform-origin:100% 50%;transform:scaleX(0.99);">018389</span>
<span class="t" style="top:438.8px;height:15px;line-height:15px;font-size:11px;color:#f2f6ff;left:465.8px;transform-origin:0 50%;transform:scaleX(0.8998);">SAPUN TECNI HELLENA KAMILICA MED 1L</span>
<span class="t" style="top:438.8px;height:15px;line-height:15px;font-size:11px;color:#f2f6ff;right:497.8px;transform-origin:100% 50%;transform:scaleX(0.985);">626,0000</span>
<span class="t" style="top:438.8px;height:15px;line-height:15px;font-size:11px;color:#f2f6ff;left:1176.0px;transform-origin:0 50%;transform:scaleX(0.985);">3872292005806</span>
<span class="t" style="top:438.8px;height:15px;line-height:15px;font-size:11px;color:#f2f6ff;left:1269.8px;transform-origin:0 50%;transform:scaleX(0.895);">OBJEKAT</span>
<div class="a" style="left:0;top:456px;width:1666.5px;height:18px;background:#4077cb"></div>
<div class="a" style="left:0;top:474px;width:1666.5px;height:1px;background:#ababab"></div>
<span class="t" style="top:457.8px;height:15px;line-height:15px;font-size:11px;color:#f2f6ff;right:1420.4px;transform-origin:100% 50%;transform:scaleX(0.985);">010</span>
<span class="t" style="top:457.8px;height:15px;line-height:15px;font-size:11px;color:#f2f6ff;right:1207.0px;transform-origin:100% 50%;transform:scaleX(0.99);">018390</span>
<span class="t" style="top:457.8px;height:15px;line-height:15px;font-size:11px;color:#f2f6ff;left:465.8px;transform-origin:0 50%;transform:scaleX(0.902);">SAPUN TECNI HELLENA LAVANDA 1L</span>
<span class="t" style="top:457.8px;height:15px;line-height:15px;font-size:11px;color:#f2f6ff;right:497.8px;transform-origin:100% 50%;transform:scaleX(0.985);">627,0000</span>
<span class="t" style="top:457.8px;height:15px;line-height:15px;font-size:11px;color:#f2f6ff;left:1176.0px;transform-origin:0 50%;transform:scaleX(0.985);">3872292005790</span>
<span class="t" style="top:457.8px;height:15px;line-height:15px;font-size:11px;color:#f2f6ff;left:1269.8px;transform-origin:0 50%;transform:scaleX(0.895);">OBJEKAT</span>
<div class="a" style="left:0;top:475px;width:1666.5px;height:18px;background:#f5f5f5"></div>
<div class="a" style="left:0;top:493px;width:1666.5px;height:1px;background:#ababab"></div>
<span class="t" style="top:476.8px;height:15px;line-height:15px;font-size:11px;color:#111;right:1420.4px;transform-origin:100% 50%;transform:scaleX(0.985);">010</span>
<span class="t" style="top:476.8px;height:15px;line-height:15px;font-size:11px;color:#111;right:1207.0px;transform-origin:100% 50%;transform:scaleX(0.99);">018391</span>
<span class="t" style="top:476.8px;height:15px;line-height:15px;font-size:11px;color:#111;left:465.8px;transform-origin:0 50%;transform:scaleX(0.9002);">DUEL OMEKSIVAC LOVE ACTUALLY 1.6L</span>
<span class="t" style="top:476.8px;height:15px;line-height:15px;font-size:11px;color:#111;right:497.8px;transform-origin:100% 50%;transform:scaleX(0.985);">828,0000</span>
<span class="t" style="top:476.8px;height:15px;line-height:15px;font-size:11px;color:#111;left:1176.0px;transform-origin:0 50%;transform:scaleX(0.985);">8606015847061</span>
<span class="t" style="top:476.8px;height:15px;line-height:15px;font-size:11px;color:#111;left:1269.8px;transform-origin:0 50%;transform:scaleX(0.895);">OBJEKAT</span>
<div class="a" style="left:0;top:494px;width:1666.5px;height:18px;background:#e8e8e8"></div>
<div class="a" style="left:0;top:512px;width:1666.5px;height:1px;background:#ababab"></div>
<span class="t" style="top:495.8px;height:15px;line-height:15px;font-size:11px;color:#111;right:1420.4px;transform-origin:100% 50%;transform:scaleX(0.985);">010</span>
<span class="t" style="top:495.8px;height:15px;line-height:15px;font-size:11px;color:#111;right:1207.0px;transform-origin:100% 50%;transform:scaleX(0.99);">018392</span>
<span class="t" style="top:495.8px;height:15px;line-height:15px;font-size:11px;color:#111;left:465.8px;transform-origin:0 50%;transform:scaleX(0.9138);">DUEL OMEKSIVAC LIKE A DIAMOND 1600ML</span>
<span class="t" style="top:495.8px;height:15px;line-height:15px;font-size:11px;color:#111;right:497.8px;transform-origin:100% 50%;transform:scaleX(0.985);">346,0000</span>
<span class="t" style="top:495.8px;height:15px;line-height:15px;font-size:11px;color:#111;left:1176.0px;transform-origin:0 50%;transform:scaleX(0.985);">8606015847023</span>
<span class="t" style="top:495.8px;height:15px;line-height:15px;font-size:11px;color:#111;left:1269.8px;transform-origin:0 50%;transform:scaleX(0.895);">OBJEKAT</span>
<div class="a" style="left:0;top:513px;width:1666.5px;height:18px;background:#f5f5f5"></div>
<div class="a" style="left:0;top:531px;width:1666.5px;height:1px;background:#ababab"></div>
<span class="t" style="top:514.8px;height:15px;line-height:15px;font-size:11px;color:#111;right:1420.4px;transform-origin:100% 50%;transform:scaleX(0.985);">010</span>
<span class="t" style="top:514.8px;height:15px;line-height:15px;font-size:11px;color:#111;right:1207.0px;transform-origin:100% 50%;transform:scaleX(0.99);">018393</span>
<span class="t" style="top:514.8px;height:15px;line-height:15px;font-size:11px;color:#111;left:465.8px;transform-origin:0 50%;transform:scaleX(0.8969);">DUEL OMEKSIVAC BABY CARE 1.6L</span>
<span class="t" style="top:514.8px;height:15px;line-height:15px;font-size:11px;color:#111;right:497.8px;transform-origin:100% 50%;transform:scaleX(0.985);">356,0000</span>
<span class="t" style="top:514.8px;height:15px;line-height:15px;font-size:11px;color:#111;left:1176.0px;transform-origin:0 50%;transform:scaleX(0.985);">8606015846927</span>
<span class="t" style="top:514.8px;height:15px;line-height:15px;font-size:11px;color:#111;left:1269.8px;transform-origin:0 50%;transform:scaleX(0.895);">OBJEKAT</span>
<div class="a" style="left:0;top:532px;width:1666.5px;height:18px;background:#e8e8e8"></div>
<div class="a" style="left:0;top:550px;width:1666.5px;height:1px;background:#ababab"></div>
<span class="t" style="top:533.8px;height:15px;line-height:15px;font-size:11px;color:#111;right:1420.4px;transform-origin:100% 50%;transform:scaleX(0.985);">010</span>
<span class="t" style="top:533.8px;height:15px;line-height:15px;font-size:11px;color:#111;right:1207.0px;transform-origin:100% 50%;transform:scaleX(0.99);">018435</span>
<span class="t" style="top:533.8px;height:15px;line-height:15px;font-size:11px;color:#111;left:465.8px;transform-origin:0 50%;transform:scaleX(0.9005);">DUEL OMEKSIVAC FLOWER POWER 1.6L</span>
<span class="t" style="top:533.8px;height:15px;line-height:15px;font-size:11px;color:#111;right:497.8px;transform-origin:100% 50%;transform:scaleX(0.985);">124,0000</span>
<span class="t" style="top:533.8px;height:15px;line-height:15px;font-size:11px;color:#111;left:1176.0px;transform-origin:0 50%;transform:scaleX(0.985);">8606015847269</span>
<span class="t" style="top:533.8px;height:15px;line-height:15px;font-size:11px;color:#111;left:1269.8px;transform-origin:0 50%;transform:scaleX(0.895);">OBJEKAT</span>
<div class="a" style="left:0;top:551px;width:1666.5px;height:18px;background:#f5f5f5"></div>
<div class="a" style="left:0;top:569px;width:1666.5px;height:1px;background:#ababab"></div>
<span class="t" style="top:552.8px;height:15px;line-height:15px;font-size:11px;color:#111;right:1420.4px;transform-origin:100% 50%;transform:scaleX(0.985);">010</span>
<span class="t" style="top:552.8px;height:15px;line-height:15px;font-size:11px;color:#111;right:1207.0px;transform-origin:100% 50%;transform:scaleX(0.99);">019064</span>
<span class="t" style="top:552.8px;height:15px;line-height:15px;font-size:11px;color:#111;left:465.8px;transform-origin:0 50%;transform:scaleX(0.8795);">HELLENA SAMPON BELI LUK 1L</span>
<span class="t" style="top:552.8px;height:15px;line-height:15px;font-size:11px;color:#111;right:497.8px;transform-origin:100% 50%;transform:scaleX(0.985);">4.545,0000</span>
<span class="t" style="top:552.8px;height:15px;line-height:15px;font-size:11px;color:#111;left:1176.0px;transform-origin:0 50%;transform:scaleX(0.985);">3872292008715</span>
<span class="t" style="top:552.8px;height:15px;line-height:15px;font-size:11px;color:#111;left:1269.8px;transform-origin:0 50%;transform:scaleX(0.895);">OBJEKAT</span>
<div class="a" style="left:0;top:570px;width:1666.5px;height:18px;background:#e8e8e8"></div>
<div class="a" style="left:0;top:588px;width:1666.5px;height:1px;background:#ababab"></div>
<span class="t" style="top:571.8px;height:15px;line-height:15px;font-size:11px;color:#111;right:1420.4px;transform-origin:100% 50%;transform:scaleX(0.985);">010</span>
<span class="t" style="top:571.8px;height:15px;line-height:15px;font-size:11px;color:#111;right:1207.0px;transform-origin:100% 50%;transform:scaleX(0.99);">019192</span>
<span class="t" style="top:571.8px;height:15px;line-height:15px;font-size:11px;color:#111;left:465.8px;transform-origin:0 50%;transform:scaleX(0.8997);">DUEL OMEKSIVAC SOFT LOTUS 1.6L</span>
<span class="t" style="top:571.8px;height:15px;line-height:15px;font-size:11px;color:#111;right:497.8px;transform-origin:100% 50%;transform:scaleX(0.985);">346,0000</span>
<span class="t" style="top:571.8px;height:15px;line-height:15px;font-size:11px;color:#111;left:1176.0px;transform-origin:0 50%;transform:scaleX(0.985);">8606015846880</span>
<span class="t" style="top:571.8px;height:15px;line-height:15px;font-size:11px;color:#111;left:1269.8px;transform-origin:0 50%;transform:scaleX(0.895);">OBJEKAT</span>
<div class="a" style="left:0;top:589px;width:1666.5px;height:18px;background:#f5f5f5"></div>
<div class="a" style="left:0;top:607px;width:1666.5px;height:1px;background:#ababab"></div>
<span class="t" style="top:590.8px;height:15px;line-height:15px;font-size:11px;color:#111;right:1420.4px;transform-origin:100% 50%;transform:scaleX(0.985);">010</span>
<span class="t" style="top:590.8px;height:15px;line-height:15px;font-size:11px;color:#111;right:1207.0px;transform-origin:100% 50%;transform:scaleX(0.99);">019345</span>
<span class="t" style="top:590.8px;height:15px;line-height:15px;font-size:11px;color:#111;left:465.8px;transform-origin:0 50%;transform:scaleX(0.8907);">UBRUS KUHINJSKI PERFEX PREMIUM 2/1 3SL</span>
<span class="t" style="top:590.8px;height:15px;line-height:15px;font-size:11px;color:#111;right:497.8px;transform-origin:100% 50%;transform:scaleX(0.985);">1.325,0000</span>
<span class="t" style="top:590.8px;height:15px;line-height:15px;font-size:11px;color:#111;left:1176.0px;transform-origin:0 50%;transform:scaleX(0.985);">8606110850898</span>
<span class="t" style="top:590.8px;height:15px;line-height:15px;font-size:11px;color:#111;left:1269.8px;transform-origin:0 50%;transform:scaleX(0.895);">OBJEKAT</span>
<div class="a" style="left:0;top:608px;width:1666.5px;height:18px;background:#e8e8e8"></div>
<div class="a" style="left:0;top:626px;width:1666.5px;height:1px;background:#ababab"></div>
<span class="t" style="top:609.8px;height:15px;line-height:15px;font-size:11px;color:#111;right:1420.4px;transform-origin:100% 50%;transform:scaleX(0.985);">010</span>
<span class="t" style="top:609.8px;height:15px;line-height:15px;font-size:11px;color:#111;right:1207.0px;transform-origin:100% 50%;transform:scaleX(0.99);">019389</span>
<span class="t" style="top:609.8px;height:15px;line-height:15px;font-size:11px;color:#111;left:465.8px;transform-origin:0 50%;transform:scaleX(0.8827);">LUCKY STRIKE 100 KSB</span>
<span class="t" style="top:609.8px;height:15px;line-height:15px;font-size:11px;color:#111;right:497.8px;transform-origin:100% 50%;transform:scaleX(0.985);">690,0000</span>
<span class="t" style="top:609.8px;height:15px;line-height:15px;font-size:11px;color:#111;left:1269.8px;transform-origin:0 50%;transform:scaleX(0.895);">OBJEKAT</span>
<span class="t" style="top:609.8px;height:15px;line-height:15px;font-size:11px;color:#111;left:329.0px;transform-origin:0 50%;transform:scaleX(0.985);">85811</span>
<div class="a" style="left:249.5px;top:0;width:1px;height:627px;background:#ababab"></div>
<div class="a" style="left:286.5px;top:0;width:1px;height:627px;background:#ababab"></div>
<div class="a" style="left:325.5px;top:0;width:1px;height:627px;background:#ababab"></div>
<div class="a" style="left:415.5px;top:0;width:1px;height:627px;background:#ababab"></div>
<div class="a" style="left:462.5px;top:0;width:1px;height:627px;background:#ababab"></div>
<div class="a" style="left:967.5px;top:0;width:1px;height:627px;background:#ababab"></div>
<div class="a" style="left:1031.5px;top:0;width:1px;height:627px;background:#ababab"></div>
<div class="a" style="left:1095.5px;top:0;width:1px;height:627px;background:#ababab"></div>
<div class="a" style="left:1172.5px;top:0;width:1px;height:627px;background:#ababab"></div>
<div class="a" style="left:1266.5px;top:0;width:1px;height:627px;background:#ababab"></div>
<div class="a" style="left:1392.5px;top:0;width:1px;height:627px;background:#ababab"></div>
<div class="a" style="left:1564.5px;top:0;width:1px;height:627px;background:#ababab"></div>
<div class="a" style="left:.5px;top:494px;width:1666.0px;height:18px;border:1px dotted #111;"></div>
</div>
<div class="a " style="left:482px;top:295px;width:1px;height:20px;background:#ababab;"></div>
<div class="a " style="left:519px;top:295px;width:1px;height:20px;background:#ababab;"></div>
<div class="a " style="left:558px;top:295px;width:1px;height:20px;background:#ababab;"></div>
<div class="a " style="left:648px;top:295px;width:1px;height:20px;background:#ababab;"></div>
<div class="a " style="left:695px;top:295px;width:1px;height:20px;background:#ababab;"></div>
<div class="a " style="left:1200px;top:295px;width:1px;height:20px;background:#ababab;"></div>
<div class="a " style="left:1264px;top:295px;width:1px;height:20px;background:#ababab;"></div>
<div class="a " style="left:1328px;top:295px;width:1px;height:20px;background:#ababab;"></div>
<div class="a " style="left:1405px;top:295px;width:1px;height:20px;background:#ababab;"></div>
<div class="a " style="left:1499px;top:295px;width:1px;height:20px;background:#ababab;"></div>
<div class="a " style="left:1625px;top:295px;width:1px;height:20px;background:#ababab;"></div>
<div class="a " style="left:1797px;top:295px;width:1px;height:20px;background:#ababab;"></div>
<div class="a " style="left:1899px;top:294px;width:17px;height:648px;background:#e4e4e4;"></div>
<svg class="a" style="left:1904px;top:299px;" width="8" height="7" viewBox="0 0 8 7" preserveAspectRatio="none"><path d="M4 .5L7.500 6.500H.5z" fill="#9e9e9e"/></svg>
<div class="a " style="left:1904px;top:711px;width:7px;height:223px;background:#9e9e9e;border-radius:3.500px;"></div>
<svg class="a" style="left:1904px;top:939px;" width="8" height="7" viewBox="0 0 8 7" preserveAspectRatio="none"><path d="M4 6.500L7.500 .5H.5z" fill="#9e9e9e"/></svg>
<div class="a " style="left:667px;top:951px;width:1232px;height:19px;background:#e2e2e2;"></div>
<svg class="a" style="left:672px;top:956.5px;" width="6" height="9" viewBox="0 0 6 9" preserveAspectRatio="none"><path d="M.5 4.500L5.500 .5V8.500z" fill="#9e9e9e"/></svg>
<div class="a " style="left:684px;top:956px;width:1058.5px;height:9px;background:#9e9e9e;border-radius:4.500px;"></div>
<svg class="a" style="left:1888px;top:956px;" width="6" height="9" viewBox="0 0 6 9" preserveAspectRatio="none"><path d="M5.500 4.500L.5 .5V8.500z" fill="#9e9e9e"/></svg>
<div class="a " style="left:232px;top:972px;width:1687px;height:31px;background:#e0e0e0;"></div>
<div class="a " style="left:232px;top:971px;width:1687px;height:1px;background:#d4d4d4;"></div>
<div class="a " style="left:233.7px;top:978px;width:16.3px;height:16px;background:#2b579a;border-radius:3.500px;"></div>
<svg class="a" style="left:233.7px;top:978px;" width="17" height="16" viewBox="0 0 17 16" preserveAspectRatio="none"><path d="M3.200 8.600l3.300 2.900L13.300 4" fill="none" stroke="#fff" stroke-width="1.300"/></svg>
<span class="t" style="top:979.00px;height:16px;line-height:16px;font-size:12px;left:254.50px;transform-origin:0 50%;transform:scaleX(0.9685);">F2 - IZMENE</span>
<div class="a " style="left:333px;top:974px;width:1px;height:24px;background:#d6d6d6;"></div>
<span class="t" style="top:979.00px;height:16px;line-height:16px;font-size:12px;left:337.80px;transform-origin:0 50%;transform:scaleX(0.9922);">F5 / F6 - NOVI SLOG</span>
<div class="a " style="left:456px;top:974px;width:1px;height:24px;background:#d6d6d6;"></div>
<div class="a " style="left:460px;top:975.5px;width:97.5px;height:22.5px;background:#ededed;border-radius:4px;box-shadow:0 1px 1.500px rgba(0,0,0,.18);"></div>
<span class="t" style="top:979.00px;height:16px;line-height:16px;font-size:12px;left:465.00px;transform-origin:0 50%;transform:scaleX(1.0520);">Obriši cenovnik</span>
<div class="a " style="left:559px;top:974px;width:1px;height:24px;background:#d6d6d6;"></div>
<span class="t" style="top:979.00px;height:16px;line-height:16px;font-size:12px;left:852.00px;transform-origin:0 50%;transform:scaleX(1.0195);">F1 - Pretraga po šifri, F7 - Pretraga po nazivu, F10 - Pretraga po atributu, F8 - Samo za objekat, F9 - Svi artikli</span>
<div class="a " style="left:1744.3px;top:975px;width:88px;height:23px;background:#ebebeb;border-radius:4px;box-shadow:0 1px 1px rgba(0,0,0,.16);"></div>
<div class="a " style="left:1820.5px;top:977px;width:1px;height:19px;background:#e0e0e0;"></div>
<span class="t" style="top:979.00px;height:16px;line-height:16px;font-size:12px;left:1757.40px;transform-origin:0 50%;transform:scaleX(1.0813);">Štampaj</span>
<svg class="a" style="left:1821.0px;top:982.75px;" width="10" height="6.5" viewBox="0 0 10 6.5" preserveAspectRatio="none"><path d="M1 1 L5.0 5.5 L9 1" fill="none" stroke="#222" stroke-width="1.1"/></svg>
<div class="a " style="left:1841.6px;top:975px;width:73px;height:23px;background:#ebebeb;border-radius:4px;box-shadow:0 1px 1px rgba(0,0,0,.14);"></div>
<span class="t" style="top:979.00px;height:16px;line-height:16px;font-size:12px;left:1845.40px;transform-origin:0 50%;transform:scaleX(1.0327);">OK / UPIŠI</span>
<div class="a " style="left:0px;top:1003px;width:1919px;height:27px;background:#2b579a;"></div>
<span class="t" style="top:1009.60px;height:16px;line-height:16px;font-size:12px;color:#fff;left:1704.90px;transform-origin:0 50%;transform:scaleX(0.9622);">T R X</span>
<div class="a " style="left:1754px;top:1004px;width:1px;height:26px;background:#234b8a;"></div>
<div class="a " style="left:1755px;top:1004px;width:1px;height:26px;background:#3761a3;"></div>
<div class="a " style="left:1780px;top:1004px;width:1px;height:26px;background:#234b8a;"></div>
<div class="a " style="left:1781px;top:1004px;width:1px;height:26px;background:#3761a3;"></div>
<div class="a " style="left:1818.5px;top:1004px;width:1px;height:26px;background:#234b8a;"></div>
<div class="a " style="left:1819.5px;top:1004px;width:1px;height:26px;background:#3761a3;"></div>
<div class="a " style="left:1852px;top:1004px;width:1px;height:26px;background:#234b8a;"></div>
<div class="a " style="left:1853px;top:1004px;width:1px;height:26px;background:#3761a3;"></div>
<div class="a " style="left:1886px;top:1004px;width:1px;height:26px;background:#234b8a;"></div>
<div class="a " style="left:1887px;top:1004px;width:1px;height:26px;background:#3761a3;"></div>
<svg class="a" style="left:1758px;top:1007px;" width="20" height="19" viewBox="0 0 20 19" preserveAspectRatio="none"><path d="M3.500 1.500h13a2 2 0 0 1 2 2v8a2 2 0 0 1-2 2H12l-2.500 4v-4H3.500a2 2 0 0 1-2-2v-8a2 2 0 0 1 2-2z" fill="none" stroke="#fff" stroke-width="1.300"/><circle cx="7.300" cy="5.800" r="1" fill="#fff"/><circle cx="12.700" cy="5.800" r="1" fill="#fff"/><path d="M6.800 8.800c1 1.300 5.400 1.300 6.400 0" fill="none" stroke="#fff" stroke-width="1.200"/></svg>
<span class="t" style="top:1010.00px;height:16px;line-height:16px;font-size:12px;color:#98a6be;left:1786.50px;transform-origin:0 50%;transform:scaleX(0.8721);">CAPS</span>
<span class="t" style="top:1010.00px;height:16px;line-height:16px;font-size:12px;color:#070b1e;left:1823.00px;transform-origin:0 50%;transform:scaleX(0.8965);">NUM</span>
<span class="t" style="top:1010.00px;height:16px;line-height:16px;font-size:12px;color:#98a6be;left:1856.50px;transform-origin:0 50%;transform:scaleX(0.8279);">SCRL</span>
<span class="t" style="top:1010.00px;height:16px;line-height:16px;font-size:12px;color:#98a6be;left:1893.50px;transform-origin:0 50%;transform:scaleX(0.9248);">INS</span>
<span class="t" style="top:936.50px;height:25px;line-height:25px;font-size:21px;color:rgba(120,120,120,.52);left:1598.00px;transform-origin:0 50%;transform:scaleX(0.9449);">Activate Windows</span>
<span class="t" style="top:962.00px;height:19px;line-height:19px;font-size:15px;color:rgba(120,120,120,.50);left:1598.00px;transform-origin:0 50%;">Go to Settings to activate Windows.</span>
<div class="a " style="left:1733px;top:967px;width:108px;height:39px;border:5px solid #e81c24;"></div>
</body></html>
